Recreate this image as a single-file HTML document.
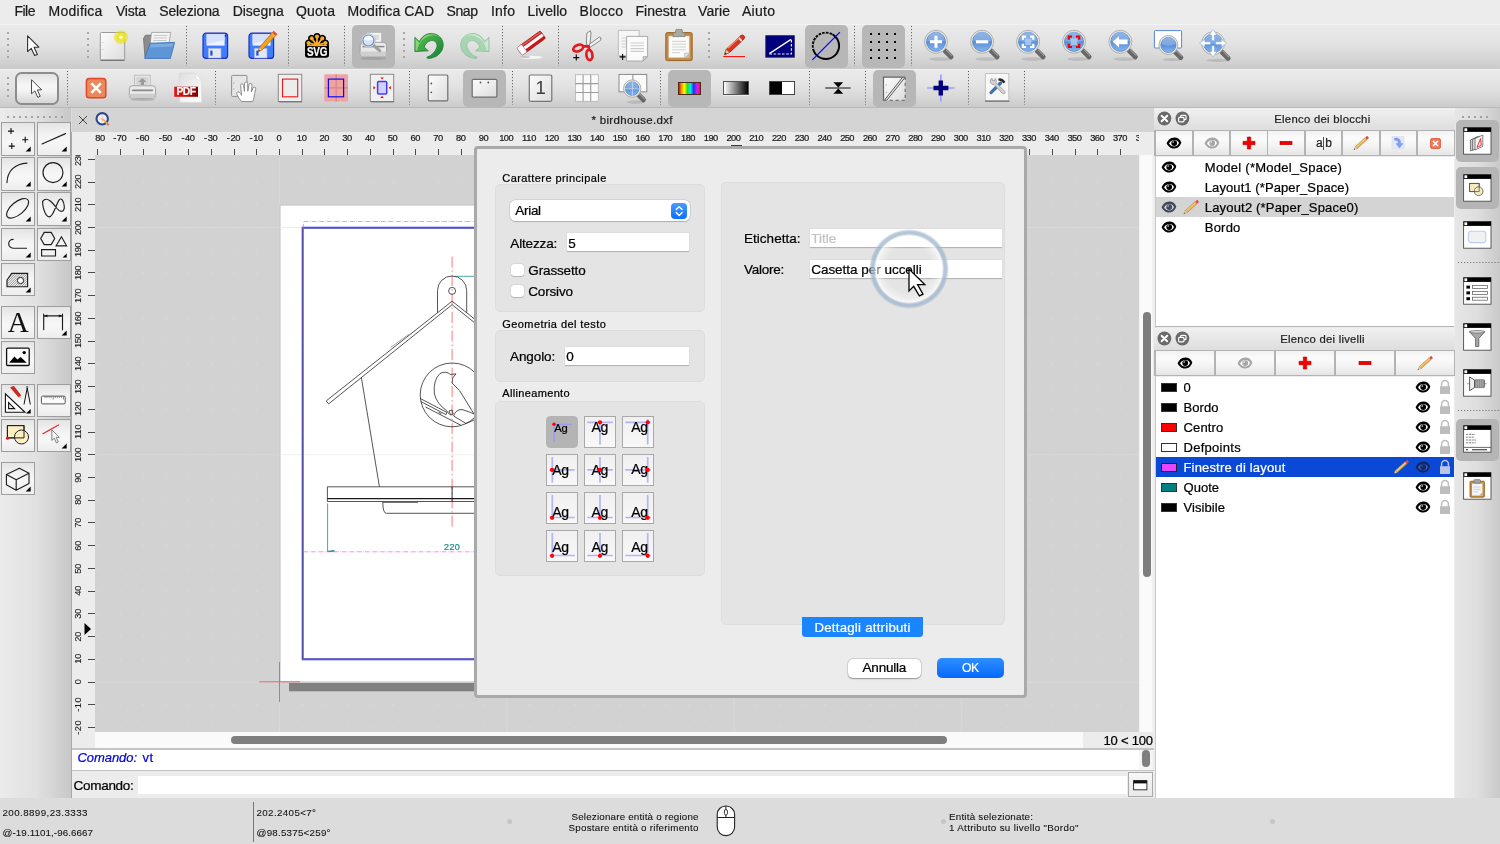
<!DOCTYPE html><html><head><meta charset="utf-8"><title>birdhouse.dxf</title><style>
html,body{margin:0;padding:0;}
#root{position:absolute;left:0;top:0;width:1500px;height:844px;will-change:transform;}
body{width:1500px;height:844px;overflow:hidden;position:relative;background:#ececec;font-family:"Liberation Sans",sans-serif;}
.t{position:absolute;white-space:pre;line-height:1;-webkit-text-stroke:0.22px currentColor;}
div{box-sizing:border-box;}
svg{position:absolute;overflow:visible;}
</style></head><body><div id="root"><div style="position:absolute;left:0px;top:0px;width:1500px;height:24px;background:#ececec;"></div><span class="t" style="left:14.50px;top:4px;font-size:14px;color:#1c1c1c;font-family:'Liberation Sans',sans-serif;letter-spacing:-0.520px;">File</span><span class="t" style="left:48.60px;top:4px;font-size:14px;color:#1c1c1c;font-family:'Liberation Sans',sans-serif;letter-spacing:0.238px;">Modifica</span><span class="t" style="left:115.90px;top:4px;font-size:14px;color:#1c1c1c;font-family:'Liberation Sans',sans-serif;letter-spacing:-0.168px;">Vista</span><span class="t" style="left:159.20px;top:4px;font-size:14px;color:#1c1c1c;font-family:'Liberation Sans',sans-serif;letter-spacing:-0.136px;">Seleziona</span><span class="t" style="left:232.70px;top:4px;font-size:14px;color:#1c1c1c;font-family:'Liberation Sans',sans-serif;letter-spacing:-0.061px;">Disegna</span><span class="t" style="left:296.00px;top:4px;font-size:14px;color:#1c1c1c;font-family:'Liberation Sans',sans-serif;letter-spacing:0.216px;">Quota</span><span class="t" style="left:347.50px;top:4px;font-size:14px;color:#1c1c1c;font-family:'Liberation Sans',sans-serif;letter-spacing:0.083px;">Modifica CAD</span><span class="t" style="left:446.50px;top:4px;font-size:14px;color:#1c1c1c;font-family:'Liberation Sans',sans-serif;letter-spacing:-0.399px;">Snap</span><span class="t" style="left:491.00px;top:4px;font-size:14px;color:#1c1c1c;font-family:'Liberation Sans',sans-serif;letter-spacing:0.216px;">Info</span><span class="t" style="left:527.50px;top:4px;font-size:14px;color:#1c1c1c;font-family:'Liberation Sans',sans-serif;letter-spacing:-0.032px;">Livello</span><span class="t" style="left:579.50px;top:4px;font-size:14px;color:#1c1c1c;font-family:'Liberation Sans',sans-serif;letter-spacing:0.296px;">Blocco</span><span class="t" style="left:635.50px;top:4px;font-size:14px;color:#1c1c1c;font-family:'Liberation Sans',sans-serif;letter-spacing:-0.011px;">Finestra</span><span class="t" style="left:698.00px;top:4px;font-size:14px;color:#1c1c1c;font-family:'Liberation Sans',sans-serif;letter-spacing:0.089px;">Varie</span><span class="t" style="left:742.00px;top:4px;font-size:14px;color:#1c1c1c;font-family:'Liberation Sans',sans-serif;letter-spacing:0.272px;">Aiuto</span><div style="position:absolute;left:0px;top:24px;width:1500px;height:44.5px;background:linear-gradient(#f7f7f7 0,#eaeaea 1.5px,#e3e3e3 42%,#d6d6d6 75%,#cacaca);"></div><div style="position:absolute;left:0px;top:68.5px;width:1500px;height:39.5px;background:linear-gradient(#f4f4f4 0,#eaeaea 1.5px,#e3e3e3 42%,#d6d6d6 75%,#cacaca);"></div><div style="position:absolute;left:0px;top:107px;width:1500px;height:1px;background:#b9b9b9;"></div><div style="position:absolute;left:0px;top:108px;width:72px;height:690px;background:linear-gradient(90deg,#ebebeb,#e1e1e1 50%,#c7c7c7);"></div><div style="position:absolute;left:71px;top:132px;width:1.2px;height:666px;background:#a9a9a9;"></div><div style="position:absolute;left:70.6px;top:108px;width:1.4px;height:24px;background:#dcdcdc;"></div><div style="position:absolute;left:72px;top:108px;width:1082px;height:24px;background:#d4d4d4;"></div><span class="t" style="left:591.50px;top:115px;font-size:11.5px;color:#1c1c1c;font-family:'Liberation Sans',sans-serif;letter-spacing:0.306px;">* birdhouse.dxf</span><div style="position:absolute;left:72px;top:132px;width:1082px;height:23px;background:#ececec;"></div><div style="position:absolute;left:72px;top:132px;width:23px;height:616px;background:#ececec;"></div><div style="position:absolute;left:95px;top:155px;width:1044px;height:577px;background:#d2d2d2;"></div><div style="position:absolute;left:95px;top:732px;width:988px;height:16px;background:#fafafa;"></div><div style="position:absolute;left:231px;top:736px;width:716px;height:8px;background:#7f7f7f;border-radius:4px;"></div><div style="position:absolute;left:1139px;top:155px;width:14.3px;height:577px;background:linear-gradient(90deg,#f0f0f0,#fafafa 12%,#fafafa 88%,#f0f0f0);"></div><div style="position:absolute;left:1143.1px;top:312.4px;width:7.8px;height:264.8px;background:#7e7e7e;border-radius:4px;"></div><div style="position:absolute;left:1153.3px;top:132px;width:2.2px;height:616px;background:#eeeeee;"></div><div style="position:absolute;left:72px;top:748px;width:1082px;height:2px;background:#c4c4c4;"></div><div style="position:absolute;left:72px;top:750px;width:1066.5px;height:20.4px;background:#fff;"></div><div style="position:absolute;left:1138.5px;top:750px;width:14.8px;height:20.4px;background:#f5f5f5;"></div><div style="position:absolute;left:72px;top:770px;width:1082px;height:1px;background:#c4c4c4;"></div><div style="position:absolute;left:72px;top:771px;width:1082px;height:27px;background:#ececec;"></div><div style="position:absolute;left:138px;top:776px;width:989px;height:18.2px;background:#fff;"></div><span class="t" style="left:77.50px;top:751px;font-size:13px;color:#0000dc;font-family:'Liberation Sans',sans-serif;letter-spacing:-0.069px;font-style:italic;">Comando:</span><span class="t" style="left:142.50px;top:751px;font-size:13px;color:#0000dc;font-family:'Liberation Sans',sans-serif;letter-spacing:0.388px;">vt</span><span class="t" style="left:73.50px;top:779px;font-size:13.5px;color:#000;font-family:'Liberation Sans',sans-serif;letter-spacing:-0.284px;">Comando:</span><div style="position:absolute;left:0px;top:798px;width:1500px;height:46px;background:#dcdcdc;"></div><div style="position:absolute;left:1154px;top:108px;width:301px;height:690px;background:#ececec;"></div><div style="position:absolute;left:1155px;top:132px;width:0.8px;height:666px;background:#c9c9c9;"></div><div style="position:absolute;left:1455px;top:108px;width:45px;height:690px;background:linear-gradient(90deg,#e6e6e6,#dedede 50%,#c9c9c9);"></div><div style="position:absolute;left:95px;top:132px;width:1044px;height:23px;overflow:hidden;"><i style="position:absolute;left:2px;top:16.5px;width:1px;height:7px;background:#4a4a4a;"></i><span class="t" style="left:-3.30px;top:2px;font-size:9.3px;color:#1a1a1a;font-family:'Liberation Sans',sans-serif;">-</span><span class="t" style="left:0.30px;top:2px;font-size:9.3px;color:#1a1a1a;font-family:'Liberation Sans',sans-serif;letter-spacing:-0.345px;">80</span><i style="position:absolute;left:25px;top:16.5px;width:1px;height:7px;background:#4a4a4a;"></i><span class="t" style="left:18.19px;top:2px;font-size:9.3px;color:#1a1a1a;font-family:'Liberation Sans',sans-serif;">-</span><span class="t" style="left:21.79px;top:2px;font-size:9.3px;color:#1a1a1a;font-family:'Liberation Sans',sans-serif;letter-spacing:-0.345px;">70</span><i style="position:absolute;left:48px;top:16.5px;width:1px;height:7px;background:#4a4a4a;"></i><span class="t" style="left:40.92px;top:2px;font-size:9.3px;color:#1a1a1a;font-family:'Liberation Sans',sans-serif;">-</span><span class="t" style="left:44.52px;top:2px;font-size:9.3px;color:#1a1a1a;font-family:'Liberation Sans',sans-serif;letter-spacing:-0.345px;">60</span><i style="position:absolute;left:70px;top:16.5px;width:1px;height:7px;background:#4a4a4a;"></i><span class="t" style="left:63.65px;top:2px;font-size:9.3px;color:#1a1a1a;font-family:'Liberation Sans',sans-serif;">-</span><span class="t" style="left:67.25px;top:2px;font-size:9.3px;color:#1a1a1a;font-family:'Liberation Sans',sans-serif;letter-spacing:-0.345px;">50</span><i style="position:absolute;left:93px;top:16.5px;width:1px;height:7px;background:#4a4a4a;"></i><span class="t" style="left:86.38px;top:2px;font-size:9.3px;color:#1a1a1a;font-family:'Liberation Sans',sans-serif;">-</span><span class="t" style="left:89.98px;top:2px;font-size:9.3px;color:#1a1a1a;font-family:'Liberation Sans',sans-serif;letter-spacing:-0.345px;">40</span><i style="position:absolute;left:116px;top:16.5px;width:1px;height:7px;background:#4a4a4a;"></i><span class="t" style="left:109.11px;top:2px;font-size:9.3px;color:#1a1a1a;font-family:'Liberation Sans',sans-serif;">-</span><span class="t" style="left:112.71px;top:2px;font-size:9.3px;color:#1a1a1a;font-family:'Liberation Sans',sans-serif;letter-spacing:-0.345px;">30</span><i style="position:absolute;left:139px;top:16.5px;width:1px;height:7px;background:#4a4a4a;"></i><span class="t" style="left:131.84px;top:2px;font-size:9.3px;color:#1a1a1a;font-family:'Liberation Sans',sans-serif;">-</span><span class="t" style="left:135.44px;top:2px;font-size:9.3px;color:#1a1a1a;font-family:'Liberation Sans',sans-serif;letter-spacing:-0.345px;">20</span><i style="position:absolute;left:161px;top:16.5px;width:1px;height:7px;background:#4a4a4a;"></i><span class="t" style="left:154.57px;top:2px;font-size:9.3px;color:#1a1a1a;font-family:'Liberation Sans',sans-serif;">-</span><span class="t" style="left:158.17px;top:2px;font-size:9.3px;color:#1a1a1a;font-family:'Liberation Sans',sans-serif;letter-spacing:-0.345px;">10</span><i style="position:absolute;left:184px;top:16.5px;width:1px;height:7px;background:#4a4a4a;"></i><span class="t" style="left:181.51px;top:2px;font-size:9.3px;color:#1a1a1a;font-family:'Liberation Sans',sans-serif;">0</span><i style="position:absolute;left:207px;top:16.5px;width:1px;height:7px;background:#4a4a4a;"></i><span class="t" style="left:201.83px;top:2px;font-size:9.3px;color:#1a1a1a;font-family:'Liberation Sans',sans-serif;letter-spacing:-0.345px;">10</span><i style="position:absolute;left:229px;top:16.5px;width:1px;height:7px;background:#4a4a4a;"></i><span class="t" style="left:224.56px;top:2px;font-size:9.3px;color:#1a1a1a;font-family:'Liberation Sans',sans-serif;letter-spacing:-0.345px;">20</span><i style="position:absolute;left:252px;top:16.5px;width:1px;height:7px;background:#4a4a4a;"></i><span class="t" style="left:247.29px;top:2px;font-size:9.3px;color:#1a1a1a;font-family:'Liberation Sans',sans-serif;letter-spacing:-0.345px;">30</span><i style="position:absolute;left:275px;top:16.5px;width:1px;height:7px;background:#4a4a4a;"></i><span class="t" style="left:270.02px;top:2px;font-size:9.3px;color:#1a1a1a;font-family:'Liberation Sans',sans-serif;letter-spacing:-0.345px;">40</span><i style="position:absolute;left:298px;top:16.5px;width:1px;height:7px;background:#4a4a4a;"></i><span class="t" style="left:292.75px;top:2px;font-size:9.3px;color:#1a1a1a;font-family:'Liberation Sans',sans-serif;letter-spacing:-0.345px;">50</span><i style="position:absolute;left:320px;top:16.5px;width:1px;height:7px;background:#4a4a4a;"></i><span class="t" style="left:315.48px;top:2px;font-size:9.3px;color:#1a1a1a;font-family:'Liberation Sans',sans-serif;letter-spacing:-0.345px;">60</span><i style="position:absolute;left:343px;top:16.5px;width:1px;height:7px;background:#4a4a4a;"></i><span class="t" style="left:338.21px;top:2px;font-size:9.3px;color:#1a1a1a;font-family:'Liberation Sans',sans-serif;letter-spacing:-0.345px;">70</span><i style="position:absolute;left:366px;top:16.5px;width:1px;height:7px;background:#4a4a4a;"></i><span class="t" style="left:360.94px;top:2px;font-size:9.3px;color:#1a1a1a;font-family:'Liberation Sans',sans-serif;letter-spacing:-0.345px;">80</span><i style="position:absolute;left:389px;top:16.5px;width:1px;height:7px;background:#4a4a4a;"></i><span class="t" style="left:383.67px;top:2px;font-size:9.3px;color:#1a1a1a;font-family:'Liberation Sans',sans-serif;letter-spacing:-0.345px;">90</span><i style="position:absolute;left:411px;top:16.5px;width:1px;height:7px;background:#4a4a4a;"></i><span class="t" style="left:404.20px;top:2px;font-size:9.3px;color:#1a1a1a;font-family:'Liberation Sans',sans-serif;letter-spacing:-0.559px;">100</span><i style="position:absolute;left:434px;top:16.5px;width:1px;height:7px;background:#4a4a4a;"></i><span class="t" style="left:426.93px;top:2px;font-size:9.3px;color:#1a1a1a;font-family:'Liberation Sans',sans-serif;letter-spacing:-0.213px;">110</span><i style="position:absolute;left:457px;top:16.5px;width:1px;height:7px;background:#4a4a4a;"></i><span class="t" style="left:449.66px;top:2px;font-size:9.3px;color:#1a1a1a;font-family:'Liberation Sans',sans-serif;letter-spacing:-0.559px;">120</span><i style="position:absolute;left:479px;top:16.5px;width:1px;height:7px;background:#4a4a4a;"></i><span class="t" style="left:472.39px;top:2px;font-size:9.3px;color:#1a1a1a;font-family:'Liberation Sans',sans-serif;letter-spacing:-0.559px;">130</span><i style="position:absolute;left:502px;top:16.5px;width:1px;height:7px;background:#4a4a4a;"></i><span class="t" style="left:495.12px;top:2px;font-size:9.3px;color:#1a1a1a;font-family:'Liberation Sans',sans-serif;letter-spacing:-0.559px;">140</span><i style="position:absolute;left:525px;top:16.5px;width:1px;height:7px;background:#4a4a4a;"></i><span class="t" style="left:517.85px;top:2px;font-size:9.3px;color:#1a1a1a;font-family:'Liberation Sans',sans-serif;letter-spacing:-0.559px;">150</span><i style="position:absolute;left:548px;top:16.5px;width:1px;height:7px;background:#4a4a4a;"></i><span class="t" style="left:540.58px;top:2px;font-size:9.3px;color:#1a1a1a;font-family:'Liberation Sans',sans-serif;letter-spacing:-0.559px;">160</span><i style="position:absolute;left:570px;top:16.5px;width:1px;height:7px;background:#4a4a4a;"></i><span class="t" style="left:563.31px;top:2px;font-size:9.3px;color:#1a1a1a;font-family:'Liberation Sans',sans-serif;letter-spacing:-0.559px;">170</span><i style="position:absolute;left:593px;top:16.5px;width:1px;height:7px;background:#4a4a4a;"></i><span class="t" style="left:586.04px;top:2px;font-size:9.3px;color:#1a1a1a;font-family:'Liberation Sans',sans-serif;letter-spacing:-0.559px;">180</span><i style="position:absolute;left:616px;top:16.5px;width:1px;height:7px;background:#4a4a4a;"></i><span class="t" style="left:608.77px;top:2px;font-size:9.3px;color:#1a1a1a;font-family:'Liberation Sans',sans-serif;letter-spacing:-0.559px;">190</span><i style="position:absolute;left:639px;top:16.5px;width:1px;height:7px;background:#4a4a4a;"></i><span class="t" style="left:631.50px;top:2px;font-size:9.3px;color:#1a1a1a;font-family:'Liberation Sans',sans-serif;letter-spacing:-0.559px;">200</span><i style="position:absolute;left:661px;top:16.5px;width:1px;height:7px;background:#4a4a4a;"></i><span class="t" style="left:654.23px;top:2px;font-size:9.3px;color:#1a1a1a;font-family:'Liberation Sans',sans-serif;letter-spacing:-0.559px;">210</span><i style="position:absolute;left:684px;top:16.5px;width:1px;height:7px;background:#4a4a4a;"></i><span class="t" style="left:676.96px;top:2px;font-size:9.3px;color:#1a1a1a;font-family:'Liberation Sans',sans-serif;letter-spacing:-0.559px;">220</span><i style="position:absolute;left:707px;top:16.5px;width:1px;height:7px;background:#4a4a4a;"></i><span class="t" style="left:699.69px;top:2px;font-size:9.3px;color:#1a1a1a;font-family:'Liberation Sans',sans-serif;letter-spacing:-0.559px;">230</span><i style="position:absolute;left:730px;top:16.5px;width:1px;height:7px;background:#4a4a4a;"></i><span class="t" style="left:722.42px;top:2px;font-size:9.3px;color:#1a1a1a;font-family:'Liberation Sans',sans-serif;letter-spacing:-0.559px;">240</span><i style="position:absolute;left:752px;top:16.5px;width:1px;height:7px;background:#4a4a4a;"></i><span class="t" style="left:745.15px;top:2px;font-size:9.3px;color:#1a1a1a;font-family:'Liberation Sans',sans-serif;letter-spacing:-0.559px;">250</span><i style="position:absolute;left:775px;top:16.5px;width:1px;height:7px;background:#4a4a4a;"></i><span class="t" style="left:767.88px;top:2px;font-size:9.3px;color:#1a1a1a;font-family:'Liberation Sans',sans-serif;letter-spacing:-0.559px;">260</span><i style="position:absolute;left:798px;top:16.5px;width:1px;height:7px;background:#4a4a4a;"></i><span class="t" style="left:790.61px;top:2px;font-size:9.3px;color:#1a1a1a;font-family:'Liberation Sans',sans-serif;letter-spacing:-0.559px;">270</span><i style="position:absolute;left:820px;top:16.5px;width:1px;height:7px;background:#4a4a4a;"></i><span class="t" style="left:813.34px;top:2px;font-size:9.3px;color:#1a1a1a;font-family:'Liberation Sans',sans-serif;letter-spacing:-0.559px;">280</span><i style="position:absolute;left:843px;top:16.5px;width:1px;height:7px;background:#4a4a4a;"></i><span class="t" style="left:836.07px;top:2px;font-size:9.3px;color:#1a1a1a;font-family:'Liberation Sans',sans-serif;letter-spacing:-0.559px;">290</span><i style="position:absolute;left:866px;top:16.5px;width:1px;height:7px;background:#4a4a4a;"></i><span class="t" style="left:858.80px;top:2px;font-size:9.3px;color:#1a1a1a;font-family:'Liberation Sans',sans-serif;letter-spacing:-0.559px;">300</span><i style="position:absolute;left:889px;top:16.5px;width:1px;height:7px;background:#4a4a4a;"></i><span class="t" style="left:881.53px;top:2px;font-size:9.3px;color:#1a1a1a;font-family:'Liberation Sans',sans-serif;letter-spacing:-0.559px;">310</span><i style="position:absolute;left:911px;top:16.5px;width:1px;height:7px;background:#4a4a4a;"></i><span class="t" style="left:904.26px;top:2px;font-size:9.3px;color:#1a1a1a;font-family:'Liberation Sans',sans-serif;letter-spacing:-0.559px;">320</span><i style="position:absolute;left:934px;top:16.5px;width:1px;height:7px;background:#4a4a4a;"></i><span class="t" style="left:926.99px;top:2px;font-size:9.3px;color:#1a1a1a;font-family:'Liberation Sans',sans-serif;letter-spacing:-0.559px;">330</span><i style="position:absolute;left:957px;top:16.5px;width:1px;height:7px;background:#4a4a4a;"></i><span class="t" style="left:949.72px;top:2px;font-size:9.3px;color:#1a1a1a;font-family:'Liberation Sans',sans-serif;letter-spacing:-0.559px;">340</span><i style="position:absolute;left:980px;top:16.5px;width:1px;height:7px;background:#4a4a4a;"></i><span class="t" style="left:972.45px;top:2px;font-size:9.3px;color:#1a1a1a;font-family:'Liberation Sans',sans-serif;letter-spacing:-0.559px;">350</span><i style="position:absolute;left:1002px;top:16.5px;width:1px;height:7px;background:#4a4a4a;"></i><span class="t" style="left:995.18px;top:2px;font-size:9.3px;color:#1a1a1a;font-family:'Liberation Sans',sans-serif;letter-spacing:-0.559px;">360</span><i style="position:absolute;left:1025px;top:16.5px;width:1px;height:7px;background:#4a4a4a;"></i><span class="t" style="left:1017.91px;top:2px;font-size:9.3px;color:#1a1a1a;font-family:'Liberation Sans',sans-serif;letter-spacing:-0.559px;">370</span><i style="position:absolute;left:1048px;top:16.5px;width:1px;height:7px;background:#4a4a4a;"></i><span class="t" style="left:1040.64px;top:2px;font-size:9.3px;color:#1a1a1a;font-family:'Liberation Sans',sans-serif;letter-spacing:-0.559px;">380</span></div><div style="position:absolute;left:72px;top:155px;width:23px;height:593px;overflow:hidden;"><i style="position:absolute;left:16px;top:572px;width:7px;height:1px;background:#4a4a4a;"></i><span class="t" style="left:-0.60px;top:567.66px;width:14.40px;height:9.3px;font-size:9.3px;letter-spacing:0.479px;color:#1a1a1a;-webkit-text-stroke:0.1px #1a1a1a;transform:rotate(-90deg);transform-origin:50% 50%;">-20</span><i style="position:absolute;left:16px;top:549px;width:7px;height:1px;background:#4a4a4a;"></i><span class="t" style="left:-0.60px;top:544.93px;width:14.40px;height:9.3px;font-size:9.3px;letter-spacing:0.479px;color:#1a1a1a;-webkit-text-stroke:0.1px #1a1a1a;transform:rotate(-90deg);transform-origin:50% 50%;">-10</span><i style="position:absolute;left:16px;top:527px;width:7px;height:1px;background:#4a4a4a;"></i><span class="t" style="left:4.05px;top:522.20px;width:5.10px;height:9.3px;font-size:9.3px;letter-spacing:0.000px;color:#1a1a1a;-webkit-text-stroke:0.1px #1a1a1a;transform:rotate(-90deg);transform-origin:50% 50%;">0</span><i style="position:absolute;left:16px;top:504px;width:7px;height:1px;background:#4a4a4a;"></i><span class="t" style="left:1.60px;top:499.47px;width:10.00px;height:9.3px;font-size:9.3px;letter-spacing:-0.345px;color:#1a1a1a;-webkit-text-stroke:0.1px #1a1a1a;transform:rotate(-90deg);transform-origin:50% 50%;">10</span><i style="position:absolute;left:16px;top:481px;width:7px;height:1px;background:#4a4a4a;"></i><span class="t" style="left:1.60px;top:476.74px;width:10.00px;height:9.3px;font-size:9.3px;letter-spacing:-0.345px;color:#1a1a1a;-webkit-text-stroke:0.1px #1a1a1a;transform:rotate(-90deg);transform-origin:50% 50%;">20</span><i style="position:absolute;left:16px;top:458px;width:7px;height:1px;background:#4a4a4a;"></i><span class="t" style="left:1.60px;top:454.01px;width:10.00px;height:9.3px;font-size:9.3px;letter-spacing:-0.345px;color:#1a1a1a;-webkit-text-stroke:0.1px #1a1a1a;transform:rotate(-90deg);transform-origin:50% 50%;">30</span><i style="position:absolute;left:16px;top:436px;width:7px;height:1px;background:#4a4a4a;"></i><span class="t" style="left:1.60px;top:431.28px;width:10.00px;height:9.3px;font-size:9.3px;letter-spacing:-0.345px;color:#1a1a1a;-webkit-text-stroke:0.1px #1a1a1a;transform:rotate(-90deg);transform-origin:50% 50%;">40</span><i style="position:absolute;left:16px;top:413px;width:7px;height:1px;background:#4a4a4a;"></i><span class="t" style="left:1.60px;top:408.55px;width:10.00px;height:9.3px;font-size:9.3px;letter-spacing:-0.345px;color:#1a1a1a;-webkit-text-stroke:0.1px #1a1a1a;transform:rotate(-90deg);transform-origin:50% 50%;">50</span><i style="position:absolute;left:16px;top:390px;width:7px;height:1px;background:#4a4a4a;"></i><span class="t" style="left:1.60px;top:385.82px;width:10.00px;height:9.3px;font-size:9.3px;letter-spacing:-0.345px;color:#1a1a1a;-webkit-text-stroke:0.1px #1a1a1a;transform:rotate(-90deg);transform-origin:50% 50%;">60</span><i style="position:absolute;left:16px;top:367px;width:7px;height:1px;background:#4a4a4a;"></i><span class="t" style="left:1.60px;top:363.09px;width:10.00px;height:9.3px;font-size:9.3px;letter-spacing:-0.345px;color:#1a1a1a;-webkit-text-stroke:0.1px #1a1a1a;transform:rotate(-90deg);transform-origin:50% 50%;">70</span><i style="position:absolute;left:16px;top:345px;width:7px;height:1px;background:#4a4a4a;"></i><span class="t" style="left:1.60px;top:340.36px;width:10.00px;height:9.3px;font-size:9.3px;letter-spacing:-0.345px;color:#1a1a1a;-webkit-text-stroke:0.1px #1a1a1a;transform:rotate(-90deg);transform-origin:50% 50%;">80</span><i style="position:absolute;left:16px;top:322px;width:7px;height:1px;background:#4a4a4a;"></i><span class="t" style="left:1.60px;top:317.63px;width:10.00px;height:9.3px;font-size:9.3px;letter-spacing:-0.345px;color:#1a1a1a;-webkit-text-stroke:0.1px #1a1a1a;transform:rotate(-90deg);transform-origin:50% 50%;">90</span><i style="position:absolute;left:16px;top:299px;width:7px;height:1px;background:#4a4a4a;"></i><span class="t" style="left:-0.80px;top:294.90px;width:14.80px;height:9.3px;font-size:9.3px;letter-spacing:-0.359px;color:#1a1a1a;-webkit-text-stroke:0.1px #1a1a1a;transform:rotate(-90deg);transform-origin:50% 50%;">100</span><i style="position:absolute;left:16px;top:277px;width:7px;height:1px;background:#4a4a4a;"></i><span class="t" style="left:-0.80px;top:272.17px;width:14.80px;height:9.3px;font-size:9.3px;letter-spacing:-0.013px;color:#1a1a1a;-webkit-text-stroke:0.1px #1a1a1a;transform:rotate(-90deg);transform-origin:50% 50%;">110</span><i style="position:absolute;left:16px;top:254px;width:7px;height:1px;background:#4a4a4a;"></i><span class="t" style="left:-0.80px;top:249.44px;width:14.80px;height:9.3px;font-size:9.3px;letter-spacing:-0.359px;color:#1a1a1a;-webkit-text-stroke:0.1px #1a1a1a;transform:rotate(-90deg);transform-origin:50% 50%;">120</span><i style="position:absolute;left:16px;top:231px;width:7px;height:1px;background:#4a4a4a;"></i><span class="t" style="left:-0.80px;top:226.71px;width:14.80px;height:9.3px;font-size:9.3px;letter-spacing:-0.359px;color:#1a1a1a;-webkit-text-stroke:0.1px #1a1a1a;transform:rotate(-90deg);transform-origin:50% 50%;">130</span><i style="position:absolute;left:16px;top:208px;width:7px;height:1px;background:#4a4a4a;"></i><span class="t" style="left:-0.80px;top:203.98px;width:14.80px;height:9.3px;font-size:9.3px;letter-spacing:-0.359px;color:#1a1a1a;-webkit-text-stroke:0.1px #1a1a1a;transform:rotate(-90deg);transform-origin:50% 50%;">140</span><i style="position:absolute;left:16px;top:186px;width:7px;height:1px;background:#4a4a4a;"></i><span class="t" style="left:-0.80px;top:181.25px;width:14.80px;height:9.3px;font-size:9.3px;letter-spacing:-0.359px;color:#1a1a1a;-webkit-text-stroke:0.1px #1a1a1a;transform:rotate(-90deg);transform-origin:50% 50%;">150</span><i style="position:absolute;left:16px;top:163px;width:7px;height:1px;background:#4a4a4a;"></i><span class="t" style="left:-0.80px;top:158.52px;width:14.80px;height:9.3px;font-size:9.3px;letter-spacing:-0.359px;color:#1a1a1a;-webkit-text-stroke:0.1px #1a1a1a;transform:rotate(-90deg);transform-origin:50% 50%;">160</span><i style="position:absolute;left:16px;top:140px;width:7px;height:1px;background:#4a4a4a;"></i><span class="t" style="left:-0.80px;top:135.79px;width:14.80px;height:9.3px;font-size:9.3px;letter-spacing:-0.359px;color:#1a1a1a;-webkit-text-stroke:0.1px #1a1a1a;transform:rotate(-90deg);transform-origin:50% 50%;">170</span><i style="position:absolute;left:16px;top:117px;width:7px;height:1px;background:#4a4a4a;"></i><span class="t" style="left:-0.80px;top:113.06px;width:14.80px;height:9.3px;font-size:9.3px;letter-spacing:-0.359px;color:#1a1a1a;-webkit-text-stroke:0.1px #1a1a1a;transform:rotate(-90deg);transform-origin:50% 50%;">180</span><i style="position:absolute;left:16px;top:95px;width:7px;height:1px;background:#4a4a4a;"></i><span class="t" style="left:-0.80px;top:90.33px;width:14.80px;height:9.3px;font-size:9.3px;letter-spacing:-0.359px;color:#1a1a1a;-webkit-text-stroke:0.1px #1a1a1a;transform:rotate(-90deg);transform-origin:50% 50%;">190</span><i style="position:absolute;left:16px;top:72px;width:7px;height:1px;background:#4a4a4a;"></i><span class="t" style="left:-0.80px;top:67.60px;width:14.80px;height:9.3px;font-size:9.3px;letter-spacing:-0.359px;color:#1a1a1a;-webkit-text-stroke:0.1px #1a1a1a;transform:rotate(-90deg);transform-origin:50% 50%;">200</span><i style="position:absolute;left:16px;top:49px;width:7px;height:1px;background:#4a4a4a;"></i><span class="t" style="left:-0.80px;top:44.87px;width:14.80px;height:9.3px;font-size:9.3px;letter-spacing:-0.359px;color:#1a1a1a;-webkit-text-stroke:0.1px #1a1a1a;transform:rotate(-90deg);transform-origin:50% 50%;">210</span><i style="position:absolute;left:16px;top:27px;width:7px;height:1px;background:#4a4a4a;"></i><span class="t" style="left:-0.80px;top:22.14px;width:14.80px;height:9.3px;font-size:9.3px;letter-spacing:-0.359px;color:#1a1a1a;-webkit-text-stroke:0.1px #1a1a1a;transform:rotate(-90deg);transform-origin:50% 50%;">220</span><i style="position:absolute;left:16px;top:4px;width:7px;height:1px;background:#4a4a4a;"></i><span class="t" style="left:-0.80px;top:-0.59px;width:14.80px;height:9.3px;font-size:9.3px;letter-spacing:-0.359px;color:#1a1a1a;-webkit-text-stroke:0.1px #1a1a1a;transform:rotate(-90deg);transform-origin:50% 50%;">230</span></div><div style="position:absolute;left:730.7px;top:144.9px;width:11.3px;height:1.2px;background:#3c3c3c;"></div><svg style="left:84px;top:622px;" width="8" height="14"><path d="M0.5 1 L7 7 L0.5 13 Z" fill="#000"/></svg><svg style="left:95px;top:155px;overflow:hidden;" width="1044" height="577" viewBox="95 155 1044 577"><defs><pattern id="gd" x="279.5" y="682.1" width="22.73" height="22.73" patternUnits="userSpaceOnUse"><rect x="-0.6" y="-0.6" width="1.3" height="1.3" fill="#dadada"/><rect x="22.1" y="-0.6" width="1.3" height="1.3" fill="#dadada"/><rect x="-0.6" y="22.1" width="1.3" height="1.3" fill="#dadada"/><rect x="22.1" y="22.1" width="1.3" height="1.3" fill="#dadada"/></pattern></defs><rect x="95" y="155" width="1048" height="577" fill="url(#gd)"/><line x1="279.5" y1="155" x2="279.5" y2="732" stroke="#d8d8d8" stroke-width="1"/><line x1="506.8" y1="155" x2="506.8" y2="732" stroke="#d8d8d8" stroke-width="1"/><line x1="734.1" y1="155" x2="734.1" y2="732" stroke="#d8d8d8" stroke-width="1"/><line x1="961.4" y1="155" x2="961.4" y2="732" stroke="#d8d8d8" stroke-width="1"/><line x1="95" y1="682.1" x2="1143" y2="682.1" stroke="#d8d8d8" stroke-width="1"/><line x1="95" y1="454.8" x2="1143" y2="454.8" stroke="#d8d8d8" stroke-width="1"/><line x1="95" y1="227.5" x2="1143" y2="227.5" stroke="#d8d8d8" stroke-width="1"/><rect x="289" y="683" width="700" height="8.3" fill="#808080"/><rect x="280" y="205" width="700" height="477" fill="#fff" stroke="#c9c9c9" stroke-width="1.3"/><line x1="280" y1="227.5" x2="303" y2="227.5" stroke="#ececec" stroke-width="1"/><line x1="280.6" y1="454.8" x2="700" y2="454.8" stroke="#f0f0f0" stroke-width="1"/><path d="M700 227.8 H302.7 V659.2 H700" fill="none" stroke="#9494f4" stroke-width="2.5"/><path d="M700 227.8 H302.7 V659.2 H700" fill="none" stroke="#46469e" stroke-width="1.2"/><path d="M303.4 552 V221.5 H700 M303.4 551.8 H700" fill="none" stroke="#ff40ff" stroke-opacity=".62" stroke-width="1" stroke-dasharray="4.5 1.5 0.7 1"/><path d="M452.1 256.6 V529.4" stroke="#ff7a7a" stroke-width="1" stroke-dasharray="11 3 1.5 3" fill="none"/><path d="M455 276.3 H700" stroke="#3aa0a0" stroke-width="0.9" fill="none"/><path d="M327.6 503.4 V551.4 M327.6 551.4 l6.5 -1 v1.2 z" stroke="#2f9a9a" stroke-width="0.9" fill="#1a8080"/><path d="M437.5 312.8 V290.6 A14.6 14.6 0 0 1 466.7 290.6 V312.8" stroke="#2a2a2a" stroke-width="0.8" fill="none"/><circle cx="452.1" cy="290.9" r="3.5" stroke="#2a2a2a" stroke-width="0.8" fill="none"/><path d="M577.9 400.9 L452.1 301.2 L326.2 400.9 L328.6 403.9 L452.1 304.7 L575.5 403.9 Z" stroke="#2a2a2a" stroke-width="0.8" fill="none"/><path d="M390.6 347.5 L408.7 334.4" stroke="#9a9a9a" stroke-width="0.9"/><path d="M361.4 377.7 L379.4 486.6" stroke="#2a2a2a" stroke-width="0.8" fill="none"/><circle cx="452.1" cy="394.9" r="31.9" stroke="#2a2a2a" stroke-width="0.8" fill="none"/><path d="M420.4 398.6 L447 412.4 L446 414.6 L420.9 401.6 M425.5 407 L461 425.3 M438.5 412.2 l3 1.6" stroke="#2a2a2a" stroke-width="0.8" fill="none"/><path d="M449.5 414.5 L446.5 410.5 Q437 404 434.4 394 Q433 380 440 373.5 Q446 370.5 450.5 374.5 L456 373.8 Q451.5 377.5 452 383 Q460 389 466 401 L474 414" stroke="#2a2a2a" stroke-width="0.8" fill="none"/><path d="M449 411 l3 -1 l1.2 4 l-2.5 1 z M453.6 416 Q455.5 409.5 462 409.5 L470 412.2 L474 414 M453.6 416 L466 423.5 L474 420" stroke="#2a2a2a" stroke-width="0.8" fill="none"/><path d="M700 486.8 H327.4 V501.5 H700" stroke="#2a2a2a" stroke-width="0.8" fill="none"/><path d="M327.4 498.6 H700" stroke="#1a1a1a" stroke-width="1.4"/><path d="M452.1 486.8 V501.5" stroke="#333" stroke-width="1"/><path d="M383 502.5 H418" stroke="#777" stroke-width="1"/><path d="M382.8 502 Q382.8 513.3 386.5 513.3 H700" stroke="#2a2a2a" stroke-width="0.8" fill="none"/><path d="M259.2 681.8 H300 M279.5 662 V702" stroke="#e26a6a" stroke-width="1"/></svg><span class="t" style="left:444.00px;top:543px;font-size:9px;color:#1a8a8a;font-family:'Liberation Sans',sans-serif;letter-spacing:0.392px;">220</span><div style="position:absolute;left:1083px;top:732px;width:70.3px;height:16.3px;background:#ececec;"></div><span class="t" style="left:1103.40px;top:734px;font-size:13px;color:#000;font-family:'Liberation Sans',sans-serif;letter-spacing:-0.195px;">10 &lt; 100</span><svg width="0" height="0" style="left:0;top:0"><defs><linearGradient id="lg" x1="0" y1="0" x2="0" y2="1"><stop offset="0" stop-color="#6f9fe0"/><stop offset=".5" stop-color="#5a8fd8"/><stop offset="1" stop-color="#86b4ec"/></linearGradient><linearGradient id="pg" x1="0" y1="0" x2="1" y2="1"><stop offset="0" stop-color="#fdfdfd"/><stop offset="1" stop-color="#dcdcdc"/></linearGradient><linearGradient id="gr" x1="0" y1="0" x2="1" y2="1"><stop offset="0" stop-color="#5cc24c"/><stop offset="1" stop-color="#15803a"/></linearGradient></defs></svg><div style="position:absolute;left:7px;top:32px;width:2px;height:2px;background:#a6a6a6;"></div><div style="position:absolute;left:7px;top:38px;width:2px;height:2px;background:#a6a6a6;"></div><div style="position:absolute;left:7px;top:44px;width:2px;height:2px;background:#a6a6a6;"></div><div style="position:absolute;left:7px;top:50px;width:2px;height:2px;background:#a6a6a6;"></div><div style="position:absolute;left:7px;top:56px;width:2px;height:2px;background:#a6a6a6;"></div><svg style="left:26.6px;top:34.9px" width="20" height="26" viewBox="0 0 20 26"><path transform="scale(1.0)" d="M0.6 0.8 L0.6 16.6 L4.3 13.4 L7.6 20.6 L10.4 19.4 L7.1 12.3 L11.9 12.1 Z" fill="#fff" stroke="#333" stroke-width="1.1" stroke-linejoin="round"/></svg><div style="position:absolute;left:87px;top:32px;width:2px;height:2px;background:#a6a6a6;"></div><div style="position:absolute;left:87px;top:38px;width:2px;height:2px;background:#a6a6a6;"></div><div style="position:absolute;left:87px;top:44px;width:2px;height:2px;background:#a6a6a6;"></div><div style="position:absolute;left:87px;top:50px;width:2px;height:2px;background:#a6a6a6;"></div><div style="position:absolute;left:87px;top:56px;width:2px;height:2px;background:#a6a6a6;"></div><svg style="left:98px;top:30px" width="30" height="33" viewBox="0 0 30 33" ><rect x="2.3" y="2.5" width="24.4" height="27.5" rx="1.2" fill="url(#pg)" stroke="#9a9a9a" stroke-width="1"/><path d="M2.5 30.4 H26.5" stroke="#777" stroke-width="1.2"/><circle cx="4.8" cy="12.5" r=".5" fill="#aaa"/><circle cx="4.8" cy="19.5" r=".5" fill="#aaa"/><circle cx="23" cy="7.3" r="7" fill="#e6de18" opacity=".55"/><circle cx="23" cy="7.3" r="4.8" fill="#efe71c" opacity=".9"/><circle cx="23" cy="7.3" r="1.8" fill="#fffde0"/></svg><svg style="left:142px;top:30px" width="35" height="31" viewBox="0 0 35 31" ><path d="M1.5 8.5 L3.5 5.2 H12 L13.5 8.5 V27 H3 Z" fill="#8c8c8c" stroke="#6a6a6a" stroke-width=".8"/><path d="M9.5 2.4 H28.6 L26 21 H7.5 Z" fill="#f4f4f4" stroke="#999" stroke-width=".8"/><path d="M12 5.5 H25.5 M11.6 8 H25 M11.2 10.5 H24.6" stroke="#c8c8c8" stroke-width="1"/><path d="M8 13.2 L32.6 12.4 L28.4 28.4 H2.6 Z" fill="#5e95d6" stroke="#3f74b8" stroke-width=".9"/><path d="M8.8 14.2 L31.4 13.5 L30.6 16.5 L8 17.4 Z" fill="#8ab6e8" opacity=".7"/></svg><svg style="left:185.9px;top:26px" width="1" height="40"><line x1="0.5" y1="0" x2="0.5" y2="40" stroke="#555" stroke-width="1" stroke-dasharray="1 2.05"/></svg><svg style="left:201.5px;top:31.8px" width="27" height="28" viewBox="0 0 27 28" ><rect x="1" y="1.2" width="24.6" height="25.2" rx="3" fill="#3f7dff" stroke="#2230b8" stroke-width="1.2"/><path d="M4.6 2.2 H22.6 V13.6 H4.6 Z" fill="#eef2ff"/><path d="M4.6 2.2 H22.6 V8 L4.6 12 Z" fill="#d6e0fb"/><rect x="6.4" y="16.4" width="12.6" height="9.6" fill="#e4e6f0" stroke="#9fb0e8" stroke-width=".6"/><rect x="8.3" y="18.6" width="2.2" height="5" fill="#2448d8"/><rect x="22.8" y="3" width="1.4" height="1.6" fill="#1a2a90"/></svg><svg style="left:247.6px;top:31.8px" width="27" height="28" viewBox="0 0 27 28" ><rect x="1" y="1.2" width="24.6" height="25.2" rx="3" fill="#3f7dff" stroke="#2230b8" stroke-width="1.2"/><path d="M4.6 2.2 H22.6 V13.6 H4.6 Z" fill="#eef2ff"/><path d="M4.6 2.2 H22.6 V8 L4.6 12 Z" fill="#d6e0fb"/><rect x="6.4" y="16.4" width="12.6" height="9.6" fill="#e4e6f0" stroke="#9fb0e8" stroke-width=".6"/><rect x="8.3" y="18.6" width="2.2" height="5" fill="#2448d8"/><rect x="22.8" y="3" width="1.4" height="1.6" fill="#1a2a90"/></svg><svg style="left:255px;top:29px" width="24" height="24" viewBox="0 0 24 24" ><path d="M18.6 2.2 L22 5.2 L7.4 20.6 L3.4 22.6 L4.6 18.2 Z" fill="#f6a21e" stroke="#b8680c" stroke-width=".8"/><path d="M17 4 L20.4 7" stroke="#ffd27a" stroke-width="1.6"/><path d="M18.6 2.2 L22 5.2 L20.4 6.9 L17 3.9 Z" fill="#e2503a"/><path d="M3.4 22.6 L4.6 18.2 L7.4 20.6 Z" fill="#f0d6a8" stroke="#a06a2a" stroke-width=".5"/><path d="M3.4 22.6 L3.9 20.7 L5 21.8 Z" fill="#222"/></svg><svg style="left:287.9px;top:26px" width="1" height="40"><line x1="0.5" y1="0" x2="0.5" y2="40" stroke="#555" stroke-width="1" stroke-dasharray="1 2.05"/></svg><svg style="left:305px;top:33px" width="24" height="26" viewBox="0 0 24 26" ><g transform="rotate(-74 12 12.4)"><rect x="10.1" y="3.4" width="3.8" height="8" fill="#000"/><circle cx="12" cy="3.6" r="3.5" fill="#000"/></g><g transform="rotate(-37 12 12.4)"><rect x="10.1" y="3.4" width="3.8" height="8" fill="#000"/><circle cx="12" cy="3.6" r="3.5" fill="#000"/></g><g transform="rotate(0 12 12.4)"><rect x="10.1" y="3.4" width="3.8" height="8" fill="#000"/><circle cx="12" cy="3.6" r="3.5" fill="#000"/></g><g transform="rotate(37 12 12.4)"><rect x="10.1" y="3.4" width="3.8" height="8" fill="#000"/><circle cx="12" cy="3.6" r="3.5" fill="#000"/></g><g transform="rotate(74 12 12.4)"><rect x="10.1" y="3.4" width="3.8" height="8" fill="#000"/><circle cx="12" cy="3.6" r="3.5" fill="#000"/></g><path d="M2.8 10.6 H21.2 Q24 10.6 24 13.4 V22 Q24 24.7 21.2 24.7 H2.8 Q0 24.7 0 22 V13.4 Q0 10.6 2.8 10.6 Z" fill="#000"/><g transform="rotate(-74 12 12.4)"><rect x="11.1" y="3.4" width="1.8" height="8" fill="#f9a928"/><circle cx="12" cy="3.6" r="2.05" fill="#f9a928"/></g><g transform="rotate(-37 12 12.4)"><rect x="11.1" y="3.4" width="1.8" height="8" fill="#f9a928"/><circle cx="12" cy="3.6" r="2.05" fill="#f9a928"/></g><g transform="rotate(0 12 12.4)"><rect x="11.1" y="3.4" width="1.8" height="8" fill="#f9a928"/><circle cx="12" cy="3.6" r="2.05" fill="#f9a928"/></g><g transform="rotate(37 12 12.4)"><rect x="11.1" y="3.4" width="1.8" height="8" fill="#f9a928"/><circle cx="12" cy="3.6" r="2.05" fill="#f9a928"/></g><g transform="rotate(74 12 12.4)"><rect x="11.1" y="3.4" width="1.8" height="8" fill="#f9a928"/><circle cx="12" cy="3.6" r="2.05" fill="#f9a928"/></g><circle cx="12" cy="12.2" r="3.2" fill="#f9a928"/><rect x="2" y="12" width="20" height="1.3" fill="#f9a928"/><rect x="0" y="13.3" width="24" height="3" fill="#000"/></svg><span class="t" style="left:306.90px;top:46px;font-size:12.4px;color:#fff;font-family:'Liberation Sans',sans-serif;letter-spacing:-0.344px;font-weight:bold;transform:scaleX(0.8);transform-origin:0 0;">SVG</span><svg style="left:344.0px;top:26px" width="1" height="40"><line x1="0.5" y1="0" x2="0.5" y2="40" stroke="#555" stroke-width="1" stroke-dasharray="1 2.05"/></svg><div style="position:absolute;left:352.3px;top:25px;width:42.4px;height:42.8px;background:#b7b7b7;border-radius:5px;"></div><svg style="left:357px;top:29px" width="33" height="32" viewBox="0 0 33 32" ><rect x="9.5" y="3.4" width="15" height="12" fill="#f2f2f2" stroke="#b8b8b8" stroke-width=".8"/><rect x="17" y="6" width="5" height="5" fill="#dcdcdc"/><path d="M3.2 16.5 Q3.2 13.4 6.4 13.4 H26.4 Q29.6 13.4 29.6 16.5 V25 Q29.6 27.6 27 27.6 H5.8 Q3.2 27.6 3.2 25 Z" fill="#e9e9e9" stroke="#9c9c9c" stroke-width=".9"/><path d="M5.5 17.6 H27.4" stroke="#8a8a8a" stroke-width="1.5"/><path d="M3.4 22.4 H29.4 V25 Q29.4 27.4 27 27.4 H5.8 Q3.4 27.4 3.4 25 Z" fill="#cfcfcf"/><ellipse cx="16.4" cy="29.4" rx="13" ry="1.4" fill="#000" opacity=".12"/><path d="M15.4 15.4 L22.6 21.6" stroke="#a0a09a" stroke-width="3.2" stroke-linecap="round"/><circle cx="11.4" cy="11.5" r="6.9" fill="#e4e4de" stroke="#b4b4ae" stroke-width=".6"/><circle cx="11.4" cy="11.5" r="5.5" fill="#d6e3f4" stroke="#5a8ed6" stroke-width="1.1"/><path d="M6.6 10.6 A4.9 4.9 0 0 1 16.2 10.6 Q11.4 12.6 6.6 10.6 Z" fill="#fff" opacity=".8"/></svg><div style="position:absolute;left:403px;top:32px;width:2px;height:2px;background:#a6a6a6;"></div><div style="position:absolute;left:403px;top:38px;width:2px;height:2px;background:#a6a6a6;"></div><div style="position:absolute;left:403px;top:44px;width:2px;height:2px;background:#a6a6a6;"></div><div style="position:absolute;left:403px;top:50px;width:2px;height:2px;background:#a6a6a6;"></div><div style="position:absolute;left:403px;top:56px;width:2px;height:2px;background:#a6a6a6;"></div><svg style="left:0;top:24px;" width="1500" height="44" viewBox="0 24 1500 44"><path d="M414.85 37.3 L414.85 51.6 L428.3 50.85 L424.2 47.2 C425.6 42.6 429.6 40.2 432.6 40.6 C436.2 41 437.8 44.2 436.7 47.6 C435.4 52 431.4 55.8 426.8 57.3 L427.6 58.4 C436 58.6 443.1 52.6 443.2 45 C443.3 38 437.6 33.5 431 33.5 C426 33.5 421.8 36.6 419.3 41.6 Z" fill="url(#gr)" stroke="#1c7f34" stroke-width=".8" stroke-linejoin="round"/><path d="M415.6 39 L415.6 50.6 L417.4 50.5 C417.6 44 424 35.6 433 35.2 C437 35 440 37 441.6 39.6 C439.6 36 436 34.2 431 34.2 C426.2 34.2 422.2 37.4 419.6 43 Z" fill="#c8f4b0" opacity=".5"/><g transform="translate(903.9 0) scale(-1 1)" opacity=".6"><path d="M414.85 37.3 L414.85 51.6 L428.3 50.85 L424.2 47.2 C425.6 42.6 429.6 40.2 432.6 40.6 C436.2 41 437.8 44.2 436.7 47.6 C435.4 52 431.4 55.8 426.8 57.3 L427.6 58.4 C436 58.6 443.1 52.6 443.2 45 C443.3 38 437.6 33.5 431 33.5 C426 33.5 421.8 36.6 419.3 41.6 Z" fill="#84cc92" stroke="#58ac70" stroke-width=".8" stroke-linejoin="round"/><path d="M415.6 39 L415.6 50.6 L417.4 50.5 C417.6 44 424 35.6 433 35.2 C437 35 440 37 441.6 39.6 C439.6 36 436 34.2 431 34.2 C426.2 34.2 422.2 37.4 419.6 43 Z" fill="#e6f8e0" opacity=".7"/></g></svg><svg style="left:501.9px;top:26px" width="1" height="40"><line x1="0.5" y1="0" x2="0.5" y2="40" stroke="#555" stroke-width="1" stroke-dasharray="1 2.05"/></svg><svg style="left:516px;top:31px" width="31" height="30" viewBox="0 0 31 30" ><ellipse cx="15" cy="26.4" rx="11.5" ry="1.6" fill="#fff" opacity=".8"/><ellipse cx="9" cy="26" rx="5" ry="1.1" fill="#000" opacity=".2"/><g transform="rotate(-36 15 12)"><rect x="0.6" y="7.6" width="29" height="9.2" rx="1.4" fill="#cf1616" stroke="#8e0e0e" stroke-width=".7"/><rect x="6.4" y="10.6" width="23" height="3.3" fill="#fff"/><rect x="0.6" y="7.6" width="6" height="9.2" rx="1" fill="#fafafa" stroke="#b0a0a0" stroke-width=".6"/><rect x="6.6" y="8" width="22.6" height="1.5" fill="#ee6a6a" opacity=".8"/></g></svg><svg style="left:558.0px;top:26px" width="1" height="40"><line x1="0.5" y1="0" x2="0.5" y2="40" stroke="#555" stroke-width="1" stroke-dasharray="1 2.05"/></svg><svg style="left:570px;top:29px" width="34" height="34" viewBox="0 0 34 34" ><path d="M16.4 15.4 L16.8 4.2 L20.4 1.8 L21 4 L19.8 17 Z" fill="#f2f2f2" stroke="#6e6e6e" stroke-width=".8" stroke-linejoin="round"/><path d="M18.8 15.8 L29.4 8 L31 9 L30.5 11.4 L20.2 18.2 Z" fill="#f2f2f2" stroke="#6e6e6e" stroke-width=".8" stroke-linejoin="round"/><ellipse cx="8.2" cy="19.1" rx="5.2" ry="3" fill="none" stroke="#e01a20" stroke-width="2.7" transform="rotate(-22 8.2 19.1)"/><ellipse cx="19.4" cy="26" rx="3" ry="5.1" fill="none" stroke="#e01a20" stroke-width="2.7" transform="rotate(-8 19.4 26)"/><path d="M12.8 17.4 L18.6 17.2 L19.2 21" stroke="#e01a20" stroke-width="2.6" fill="none" stroke-linejoin="round"/><path d="M3.3 28.6 H9.3 M6.3 25.6 V31.6" stroke="#000" stroke-width="1.1"/></svg><svg style="left:616px;top:29px" width="34" height="34" viewBox="0 0 34 34" ><path d="M2.4 1.4 H23.2 V26.6 H2.4 Z" fill="#f6f6f6" stroke="#b4b4b4" stroke-width=".8"/><path d="M5.5 9 H14 M5.5 12 H14 M5.5 15 H12 M5.5 18 H11" stroke="#cfcfcf" stroke-width="1"/><path d="M10.6 7.4 H31.6 V27.6 L27 32 H10.6 Z" fill="#fbfbfb" stroke="#a2a2a2" stroke-width=".9"/><path d="M31.6 27.6 L27 32 V27.6 Z" fill="#c9c9c9" stroke="#9a9a9a" stroke-width=".6"/><path d="M14.5 14 H28 M14.5 16.8 H28 M14.5 19.6 H28 M14.5 22.4 H28" stroke="#cdcdcd" stroke-width="1.1"/><path d="M3.6 27.9 H9.6 M6.6 24.9 V30.9" stroke="#000" stroke-width="1.1"/></svg><svg style="left:664px;top:28px" width="30" height="34" viewBox="0 0 30 34" ><rect x="1.8" y="4.6" width="26.4" height="28" rx="1.6" fill="#c68a3c" stroke="#8e5a18" stroke-width=".9"/><path d="M4.6 8 H25.4 V29.8 H4.6 Z" fill="#fafafa" stroke="#b9b09f" stroke-width=".6"/><path d="M25.4 25 L20.6 29.8 H25.4 Z" fill="#b4b4b4"/><path d="M20.6 29.8 V25 H25.4" fill="#dedede" stroke="#aaa" stroke-width=".5"/><path d="M8 13.4 H22 M8 16.2 H22 M8 19 H22 M8 21.8 H22 M8 24.6 H16" stroke="#d2d2d2" stroke-width="1"/><path d="M9 8.6 V5.8 Q9 4.4 10.6 4.4 H11.6 V2.6 Q11.6 1.4 13 1.4 H17 Q18.4 1.4 18.4 2.6 V4.4 H19.4 Q21 4.4 21 5.8 V8.6 Z" fill="#a9a9a1" stroke="#77776f" stroke-width=".7"/></svg><div style="position:absolute;left:708px;top:32px;width:2px;height:2px;background:#a6a6a6;"></div><div style="position:absolute;left:708px;top:38px;width:2px;height:2px;background:#a6a6a6;"></div><div style="position:absolute;left:708px;top:44px;width:2px;height:2px;background:#a6a6a6;"></div><div style="position:absolute;left:708px;top:50px;width:2px;height:2px;background:#a6a6a6;"></div><div style="position:absolute;left:708px;top:56px;width:2px;height:2px;background:#a6a6a6;"></div><svg style="left:721px;top:31px" width="26" height="28" viewBox="0 0 26 28" ><path d="M2.2 25.6 H24" stroke="#f00" stroke-width="1"/><path d="M19.8 4.6 Q21.6 3.2 23.2 5 Q24.4 6.6 22.8 8.2 L8.6 21.4 L3.6 23.8 L5.2 18.4 Z" fill="#e0321c" stroke="#8a2a12" stroke-width=".8"/><path d="M17.6 6.8 L20.8 10" stroke="#e8e8e8" stroke-width="1.8"/><path d="M7 17 L19 6" stroke="#f58a6a" stroke-width="1.3"/><path d="M3.6 23.8 L5.2 18.4 L8.6 21.4 Z" fill="#eacb9c" stroke="#8a5a2a" stroke-width=".5"/><path d="M3.6 23.8 L4.2 21.6 L5.6 22.8 Z" fill="#222"/></svg><svg style="left:765px;top:35px" width="30" height="23" viewBox="0 0 30 23" ><rect x=".8" y=".7" width="28.5" height="21.5" fill="#00007e" stroke="#1c1c4a" stroke-width=".8"/><path d="M4.4 18.6 L26 4.4" stroke="#fff" stroke-width="1.3"/><path d="M4.4 19 H26.4 V4.6" stroke="#e8e8ff" stroke-width="1.2" stroke-dasharray="2.6 1.6" fill="none"/></svg><div style="position:absolute;left:805px;top:25px;width:42.5px;height:42.8px;background:#b7b7b7;border-radius:5px;"></div><svg style="left:808px;top:28px" width="36" height="36" viewBox="0 0 36 36" ><circle cx="17.9" cy="17.8" r="13.2" fill="none" stroke="#000" stroke-width="1.9"/><path d="M4.5 21 A13.6 13.6 0 0 1 24.6 6" fill="none" stroke="#b7b7b7" stroke-width="3" stroke-dasharray="1.3 2.6"/><path d="M4.4 31.8 L31.9 4.2" stroke="#0000f0" stroke-width="1.2"/></svg><svg style="left:853.8px;top:26px" width="1" height="40"><line x1="0.5" y1="0" x2="0.5" y2="40" stroke="#555" stroke-width="1" stroke-dasharray="1 2.05"/></svg><div style="position:absolute;left:862.2px;top:25px;width:42.5px;height:42.8px;background:#b7b7b7;border-radius:5px;"></div><div style="position:absolute;left:869.9px;top:32.8px;width:2.2px;height:2.2px;background:#000;"></div><div style="position:absolute;left:869.9px;top:40.8px;width:2.2px;height:2.2px;background:#000;"></div><div style="position:absolute;left:869.9px;top:48.9px;width:2.2px;height:2.2px;background:#000;"></div><div style="position:absolute;left:869.9px;top:56.8px;width:2.2px;height:2.2px;background:#000;"></div><div style="position:absolute;left:878.0px;top:32.8px;width:2.2px;height:2.2px;background:#000;"></div><div style="position:absolute;left:878.0px;top:40.8px;width:2.2px;height:2.2px;background:#000;"></div><div style="position:absolute;left:878.0px;top:48.9px;width:2.2px;height:2.2px;background:#000;"></div><div style="position:absolute;left:878.0px;top:56.8px;width:2.2px;height:2.2px;background:#000;"></div><div style="position:absolute;left:885.9px;top:32.8px;width:2.2px;height:2.2px;background:#000;"></div><div style="position:absolute;left:885.9px;top:40.8px;width:2.2px;height:2.2px;background:#000;"></div><div style="position:absolute;left:885.9px;top:48.9px;width:2.2px;height:2.2px;background:#000;"></div><div style="position:absolute;left:885.9px;top:56.8px;width:2.2px;height:2.2px;background:#000;"></div><div style="position:absolute;left:894.0px;top:32.8px;width:2.2px;height:2.2px;background:#000;"></div><div style="position:absolute;left:894.0px;top:40.8px;width:2.2px;height:2.2px;background:#000;"></div><div style="position:absolute;left:894.0px;top:48.9px;width:2.2px;height:2.2px;background:#000;"></div><div style="position:absolute;left:894.0px;top:56.8px;width:2.2px;height:2.2px;background:#000;"></div><svg style="left:910.8px;top:26px" width="1" height="40"><line x1="0.5" y1="0" x2="0.5" y2="40" stroke="#555" stroke-width="1" stroke-dasharray="1 2.05"/></svg><svg style="left:0;top:24px;" width="1500" height="44" viewBox="0 24 1500 44"><ellipse cx="940.9" cy="59.0" rx="11.7" ry="1.7" fill="#000" opacity=".11"/><path d="M943.3 49.1 L948.2 54.0" stroke="#8c8c86" stroke-width="2.4" stroke-linecap="round"/><path d="M945.0 50.8 L951.0 56.8" stroke="#676767" stroke-width="5" stroke-linecap="round"/><path d="M946.2 50.0 L951.8 55.6" stroke="#9a9a94" stroke-width="1.1" stroke-linecap="round"/><circle cx="936" cy="41.8" r="11.5" fill="#e9e9e2" stroke="#a9a9a2" stroke-width="0.9"/><circle cx="936" cy="41.8" r="9.6" fill="url(#lg)" stroke="#4d83cf" stroke-width="0.7"/><path d="M927.0 40.8 A9.0 9.0 0 0 1 945.0 40.8 Q936 44.3 927.0 40.8 Z" fill="#fff" opacity=".22"/><path d="M930 41.8 H942 M936 35.8 V47.8" stroke="#fff" stroke-linecap="butt" fill="none" stroke-width="3.1"/><ellipse cx="987.0" cy="59.0" rx="11.7" ry="1.7" fill="#000" opacity=".11"/><path d="M989.4 49.1 L994.3 54.0" stroke="#8c8c86" stroke-width="2.4" stroke-linecap="round"/><path d="M991.1 50.8 L997.1 56.8" stroke="#676767" stroke-width="5" stroke-linecap="round"/><path d="M992.3 50.0 L997.9 55.6" stroke="#9a9a94" stroke-width="1.1" stroke-linecap="round"/><circle cx="982.1" cy="41.8" r="11.5" fill="#e9e9e2" stroke="#a9a9a2" stroke-width="0.9"/><circle cx="982.1" cy="41.8" r="9.6" fill="url(#lg)" stroke="#4d83cf" stroke-width="0.7"/><path d="M973.1 40.8 A9.0 9.0 0 0 1 991.1 40.8 Q982.1 44.3 973.1 40.8 Z" fill="#fff" opacity=".22"/><path d="M976 41.8 H988.2" stroke="#fff" stroke-linecap="butt" fill="none" stroke-width="3.1"/><ellipse cx="1033.0" cy="59.0" rx="11.7" ry="1.7" fill="#000" opacity=".11"/><path d="M1035.4 49.1 L1040.3 54.0" stroke="#8c8c86" stroke-width="2.4" stroke-linecap="round"/><path d="M1037.1 50.8 L1043.1 56.8" stroke="#676767" stroke-width="5" stroke-linecap="round"/><path d="M1038.3 50.0 L1043.9 55.6" stroke="#9a9a94" stroke-width="1.1" stroke-linecap="round"/><circle cx="1028.1" cy="41.8" r="11.5" fill="#e9e9e2" stroke="#a9a9a2" stroke-width="0.9"/><circle cx="1028.1" cy="41.8" r="9.6" fill="url(#lg)" stroke="#4d83cf" stroke-width="0.7"/><path d="M1019.0999999999999 40.8 A9.0 9.0 0 0 1 1037.1 40.8 Q1028.1 44.3 1019.0999999999999 40.8 Z" fill="#fff" opacity=".22"/><rect x="1024.8999999999999" y="38.599999999999994" width="6.4" height="6.4" fill="#b4d0f4" opacity=".75"/><path d="M1022.8999999999999 39.8 V36.599999999999994 H1026.1 M1030.1 36.599999999999994 H1033.3 V39.8 M1033.3 43.8 V47.0 H1030.1 M1026.1 47.0 H1022.8999999999999 V43.8" stroke="#fff" stroke-width="2.2" fill="none"/><ellipse cx="1078.9" cy="59.0" rx="11.7" ry="1.7" fill="#000" opacity=".11"/><path d="M1081.3 49.1 L1086.2 54.0" stroke="#8c8c86" stroke-width="2.4" stroke-linecap="round"/><path d="M1083.0 50.8 L1089.0 56.8" stroke="#676767" stroke-width="5" stroke-linecap="round"/><path d="M1084.2 50.0 L1089.8 55.6" stroke="#9a9a94" stroke-width="1.1" stroke-linecap="round"/><circle cx="1074" cy="41.8" r="11.5" fill="#e9e9e2" stroke="#a9a9a2" stroke-width="0.9"/><circle cx="1074" cy="41.8" r="9.6" fill="url(#lg)" stroke="#4d83cf" stroke-width="0.7"/><path d="M1065.0 40.8 A9.0 9.0 0 0 1 1083.0 40.8 Q1074 44.3 1065.0 40.8 Z" fill="#fff" opacity=".22"/><rect x="1070.8" y="38.599999999999994" width="6.4" height="6.4" fill="#b4d0f4" opacity=".75"/><path d="M1068.8 39.8 V36.599999999999994 H1072 M1076 36.599999999999994 H1079.2 V39.8 M1079.2 43.8 V47.0 H1076 M1072 47.0 H1068.8 V43.8" stroke="#f00000" stroke-width="2.2" fill="none"/><ellipse cx="1125.2" cy="59.0" rx="11.7" ry="1.7" fill="#000" opacity=".11"/><path d="M1127.6 49.1 L1132.5 54.0" stroke="#8c8c86" stroke-width="2.4" stroke-linecap="round"/><path d="M1129.3 50.8 L1135.3 56.8" stroke="#676767" stroke-width="5" stroke-linecap="round"/><path d="M1130.5 50.0 L1136.1 55.6" stroke="#9a9a94" stroke-width="1.1" stroke-linecap="round"/><circle cx="1120.3" cy="41.8" r="11.5" fill="#e9e9e2" stroke="#a9a9a2" stroke-width="0.9"/><circle cx="1120.3" cy="41.8" r="9.6" fill="url(#lg)" stroke="#4d83cf" stroke-width="0.7"/><path d="M1111.3 40.8 A9.0 9.0 0 0 1 1129.3 40.8 Q1120.3 44.3 1111.3 40.8 Z" fill="#fff" opacity=".22"/><path d="M1112.6 41.8 L1119 36.199999999999996 V39.4 H1127.6 V44.199999999999996 H1119 V47.4 Z" fill="#fff"/><rect x="1154.4" y="30.6" width="27.2" height="17.4" rx="1" fill="#fff" stroke="#5a86d2" stroke-width="1"/><ellipse cx="1172.5" cy="59.6" rx="9.8" ry="1.7" fill="#000" opacity=".11"/><path d="M1174.3 50.9 L1178.0 54.6" stroke="#8c8c86" stroke-width="2.4" stroke-linecap="round"/><path d="M1174.8 51.4 L1180.8 57.4" stroke="#676767" stroke-width="5" stroke-linecap="round"/><path d="M1176.0 50.6 L1181.6 56.2" stroke="#9a9a94" stroke-width="1.1" stroke-linecap="round"/><circle cx="1168.4" cy="45" r="9.5" fill="#e9e9e2" stroke="#a9a9a2" stroke-width="0.9"/><circle cx="1168.4" cy="45" r="7.6" fill="url(#lg)" stroke="#4d83cf" stroke-width="0.7"/><path d="M1161.4 44 A6.999999999999999 6.999999999999999 0 0 1 1175.4 44 Q1168.4 47.5 1161.4 44 Z" fill="#fff" opacity=".22"/><ellipse cx="1218.0" cy="60.4" rx="11.7" ry="1.7" fill="#000" opacity=".11"/><path d="M1220.4 50.5 L1225.3 55.4" stroke="#8c8c86" stroke-width="2.4" stroke-linecap="round"/><path d="M1222.1 52.2 L1228.1 58.2" stroke="#676767" stroke-width="5" stroke-linecap="round"/><path d="M1223.3 51.4 L1228.9 57.0" stroke="#9a9a94" stroke-width="1.1" stroke-linecap="round"/><circle cx="1213.1" cy="43.2" r="11.5" fill="#e9e9e2" stroke="#a9a9a2" stroke-width="0.9"/><circle cx="1213.1" cy="43.2" r="9.6" fill="url(#lg)" stroke="#4d83cf" stroke-width="0.7"/><path d="M1204.1 42.2 A9.0 9.0 0 0 1 1222.1 42.2 Q1213.1 45.7 1204.1 42.2 Z" fill="#fff" opacity=".22"/><path transform="rotate(0 1213.1 43.2)" d="M1211.6999999999998 40.7 V35.0 H1209.1999999999998 L1213.1 29.6 L1217.0 35.0 H1214.5 V40.7 Z" fill="#fff" stroke="#6f9fe2" stroke-width=".5"/><path transform="rotate(90 1213.1 43.2)" d="M1211.6999999999998 40.7 V35.0 H1209.1999999999998 L1213.1 29.6 L1217.0 35.0 H1214.5 V40.7 Z" fill="#fff" stroke="#6f9fe2" stroke-width=".5"/><path transform="rotate(180 1213.1 43.2)" d="M1211.6999999999998 40.7 V35.0 H1209.1999999999998 L1213.1 29.6 L1217.0 35.0 H1214.5 V40.7 Z" fill="#fff" stroke="#6f9fe2" stroke-width=".5"/><path transform="rotate(270 1213.1 43.2)" d="M1211.6999999999998 40.7 V35.0 H1209.1999999999998 L1213.1 29.6 L1217.0 35.0 H1214.5 V40.7 Z" fill="#fff" stroke="#6f9fe2" stroke-width=".5"/></svg><svg style="left:78px;top:115px" width="10" height="10" viewBox="0 0 10 10" ><path d="M1 1 L9 9 M9 1 L1 9" stroke="#444" stroke-width="1"/></svg><svg style="left:94px;top:111px" width="18" height="18" viewBox="0 0 18 18" ><circle cx="8.2" cy="7.8" r="5.7" fill="#f4f4f8" stroke="#2c478f" stroke-width="2.1"/><path d="M4.6 7.8 H11.6 M8.2 4.4 V11.2" stroke="#e8b0b0" stroke-width=".7"/><path d="M8.6 8 L13.6 13" stroke="#f2b21c" stroke-width="1.7"/><circle cx="14" cy="13.4" r="1.2" fill="#e8707a"/></svg><div style="position:absolute;left:1127.6px;top:772.4px;width:25px;height:24.7px;background:linear-gradient(#f8f8f8,#e8e8e8);border:1px solid #a9a9a9;"></div><svg style="left:1133px;top:780px" width="15" height="11" viewBox="0 0 15 11" ><rect x=".6" y=".6" width="13.3" height="9.2" fill="#fff" stroke="#222" stroke-width=".9"/><rect x=".6" y=".6" width="13.3" height="2.8" fill="#111"/></svg><div style="position:absolute;left:1142.2px;top:750.3px;width:7.8px;height:16.5px;background:#7f7f7f;border-radius:3.9px;"></div><div style="position:absolute;left:7px;top:77px;width:2px;height:2px;background:#a6a6a6;"></div><div style="position:absolute;left:7px;top:83px;width:2px;height:2px;background:#a6a6a6;"></div><div style="position:absolute;left:7px;top:89px;width:2px;height:2px;background:#a6a6a6;"></div><div style="position:absolute;left:7px;top:95px;width:2px;height:2px;background:#a6a6a6;"></div><div style="position:absolute;left:14.6px;top:72.4px;width:44px;height:32.2px;background:linear-gradient(#e2e2e2,#f6f6f6 40%,#f2f2f2 60%,#d6d6d6);border:2px solid #8c8c8c;border-radius:6.5px;"></div><svg style="left:30.5px;top:78.7px" width="20" height="26" viewBox="0 0 20 26"><path transform="scale(0.89)" d="M0.6 0.8 L0.6 16.6 L4.3 13.4 L7.6 20.6 L10.4 19.4 L7.1 12.3 L11.9 12.1 Z" fill="#fff" stroke="#444" stroke-width="1.1" stroke-linejoin="round"/></svg><svg style="left:67.0px;top:71px" width="1" height="34"><line x1="0.5" y1="0" x2="0.5" y2="34" stroke="#555" stroke-width="1" stroke-dasharray="1 2.05"/></svg><svg style="left:85px;top:77px" width="22" height="22" viewBox="0 0 22 22" ><rect x="1.4" y="1.4" width="19.4" height="19.4" rx="2.8" fill="#e88a5c" stroke="#e2452c" stroke-width="1.5"/><path d="M6.4 6.4 L15.8 15.8 M15.8 6.4 L6.4 15.8" stroke="#fff" stroke-width="2.6"/></svg><svg style="left:128px;top:74px" width="30" height="28" viewBox="0 0 30 28" ><rect x="6.6" y="1.2" width="15.6" height="11" fill="#e6e6e6" stroke="#b4b4b4" stroke-width=".8"/><rect x="8.4" y="3" width="12" height="8" fill="#d4d4d4"/><path d="M14.4 4 L18.4 8 H16 V11 H12.8 V8 H10.4 Z" fill="#9a9a9a"/><path d="M1.4 14.6 Q1.4 11.8 4.4 11.8 H24.6 Q27.6 11.8 27.6 14.6 V21.6 Q27.6 24 25.2 24 H3.8 Q1.4 24 1.4 21.6 Z" fill="#ebebeb" stroke="#9c9c9c" stroke-width=".9"/><path d="M4.6 16.4 H24.4" stroke="#8a8a8a" stroke-width="1.6" stroke-linecap="round"/><path d="M1.6 19.8 H27.4 V21.6 Q27.4 23.8 25.2 23.8 H3.8 Q1.6 23.8 1.6 21.6 Z" fill="#cdcdcd"/><ellipse cx="14.5" cy="25.6" rx="12.4" ry="1.3" fill="#000" opacity=".16"/></svg><svg style="left:173px;top:71px" width="30" height="34" viewBox="0 0 30 34" ><defs><linearGradient id="pdfp" x1="0" y1="0" x2=".6" y2="1"><stop offset="0" stop-color="#dedede"/><stop offset="1" stop-color="#fbfbfb"/></linearGradient><linearGradient id="pdfb" x1="0" y1="0" x2="1" y2="0"><stop offset="0" stop-color="#e01818"/><stop offset=".55" stop-color="#c00c0c"/><stop offset="1" stop-color="#7a0000"/></linearGradient></defs><path d="M6.6 2 H22 L28.7 9.4 V31.4 H6.6 Z" fill="url(#pdfp)" stroke="#d4d4d4" stroke-width=".6"/><path d="M22 2 L23.4 8.2 L28.7 9.4 Z" fill="#fff" stroke="#d0d0d0" stroke-width=".4"/><rect x="1.2" y="15.7" width="23.8" height="10.1" fill="url(#pdfb)"/></svg><span class="t" style="left:176.60px;top:87px;font-size:10.3px;color:#fff;font-family:'Liberation Sans',sans-serif;letter-spacing:-0.600px;font-weight:bold;">PDF</span><svg style="left:214.8px;top:71px" width="1" height="34"><line x1="0.5" y1="0" x2="0.5" y2="34" stroke="#555" stroke-width="1" stroke-dasharray="1 2.05"/></svg><svg style="left:230px;top:74px" width="30" height="30" viewBox="0 0 30 30" ><rect x="1.6" y="1.4" width="15.4" height="21" rx="1" fill="#e6e6e6" stroke="#8e8e8e" stroke-width="1"/><circle cx="3.8" cy="9" r=".5" fill="#777"/><circle cx="3.8" cy="15" r=".5" fill="#777"/><path d="M11.6 27.6 Q8.4 24 7 20.6 Q6.2 18.4 7.8 17.8 Q9.4 17.6 10.4 19.4 L11.6 21.4 L10.6 11.6 Q10.5 9.9 12 9.8 Q13.5 9.8 13.7 11.4 L14.4 17.4 L14.6 9.4 Q14.7 7.8 16.2 7.9 Q17.7 8 17.7 9.6 L17.8 17.2 L19 10.6 Q19.3 9.1 20.8 9.4 Q22.2 9.8 22 11.4 L21.4 18 L23 14 Q23.6 12.7 24.9 13.2 Q26.1 13.8 25.7 15.2 Q24.4 20 24 23.6 Q23.6 26 22.4 27.6 Z" fill="#fff" stroke="#8c8c8c" stroke-width="1" stroke-linejoin="round"/></svg><svg style="left:277px;top:73px" width="26" height="30" viewBox="0 0 26 30" ><rect x="1.3" y="1.3" width="23.4" height="27.2" fill="#efefef" stroke="#8a8a8a" stroke-width="1"/><path d="M2 28.9 H25" stroke="#6e6e6e" stroke-width="1"/><rect x="5.5" y="6.1" width="15.2" height="17.7" fill="#ececec" stroke="#f01818" stroke-width="1.1"/></svg><svg style="left:324px;top:74px" width="25" height="28" viewBox="0 0 25 28" ><rect x=".3" y=".3" width="23.7" height="27.2" fill="#efa3a3"/><path d="M12.2 .3 V27.5 M.3 13.9 H24" stroke="#d88888" stroke-width="1.4"/><rect x="4.4" y="5.1" width="15.2" height="17.7" fill="none" stroke="#0a0af0" stroke-width="1.2"/></svg><svg style="left:369px;top:73px" width="26" height="30" viewBox="0 0 26 30" ><rect x="1.3" y="1.3" width="23.4" height="27.2" fill="#f0f0f0" stroke="#8a8a8a" stroke-width="1"/><path d="M2 28.9 H25" stroke="#6e6e6e" stroke-width="1"/><rect x="8.6" y="8.6" width="9.1" height="12.4" rx="1" fill="#d2d2ff" stroke="#3c3cff" stroke-width="1.5"/><path d="M11.4 4.4 H14.8 L13.1 6.6 Z M11.4 25 H14.8 L13.1 22.8 Z M4.4 13.1 V16.5 L6.6 14.8 Z M21.8 13.1 V16.5 L19.6 14.8 Z" fill="#f00"/></svg><svg style="left:409.0px;top:71px" width="1" height="34"><line x1="0.5" y1="0" x2="0.5" y2="34" stroke="#555" stroke-width="1" stroke-dasharray="1 2.05"/></svg><svg style="left:427px;top:74px" width="22" height="28" viewBox="0 0 22 28" ><rect x="1.3" y="1" width="19.5" height="25.9" rx="1.2" fill="url(#pg)" stroke="#6e6e6e" stroke-width="1.2"/><circle cx="4.3" cy="9.5" r=".9" fill="#555"/><circle cx="4.3" cy="18.3" r=".9" fill="#555"/></svg><div style="position:absolute;left:463.1px;top:70.2px;width:42.7px;height:37px;background:#b7b7b7;border-radius:5px;"></div><svg style="left:471px;top:78px" width="27" height="20" viewBox="0 0 27 20" ><rect x="1.2" y="1.4" width="24.7" height="17.8" rx="1.2" fill="url(#pg)" stroke="#6e6e6e" stroke-width="1.2"/><circle cx="9.5" cy="4.5" r=".9" fill="#555"/><circle cx="17.3" cy="4.5" r=".9" fill="#555"/></svg><svg style="left:512.0px;top:71px" width="1" height="34"><line x1="0.5" y1="0" x2="0.5" y2="34" stroke="#555" stroke-width="1" stroke-dasharray="1 2.05"/></svg><svg style="left:528px;top:74px" width="25" height="28" viewBox="0 0 25 28" ><rect x="1.3" y="1" width="22.5" height="26.3" rx="1.2" fill="url(#pg)" stroke="#767676" stroke-width="1.2"/></svg><span class="t" style="left:535.46px;top:79px;font-size:18.5px;color:#3c3c3c;font-family:'Liberation Sans',sans-serif;-webkit-text-stroke:0;">1</span><svg style="left:575px;top:74px" width="24" height="28" viewBox="0 0 24 28" ><rect x=".5" y=".7" width="22.8" height="26.6" fill="#fafafa" stroke="#b4b4b4" stroke-width=".8"/><path d="M8.1 .7 V27.3 M15.7 .7 V27.3 M.5 9.6 H23.3 M.5 18.5 H23.3" stroke="#9c9c9c" stroke-width="1.1"/></svg><svg style="left:0;top:68px;" width="1500" height="40" viewBox="0 68 1500 40"><rect x="619" y="74.4" width="27.8" height="17.4" fill="#fafafa" stroke="#8a8a8a" stroke-width="1"/><path d="M632.9 74.4 V91.8" stroke="#8a8a8a" stroke-width="1"/><ellipse cx="635.9" cy="102.0" rx="8.9" ry="1.7" fill="#000" opacity=".11"/><path d="M637.5 93.9 L640.6 97.0" stroke="#8c8c86" stroke-width="2.4" stroke-linecap="round"/><path d="M637.4 93.8 L643.4 99.8" stroke="#676767" stroke-width="5" stroke-linecap="round"/><path d="M638.6 93.0 L644.2 98.6" stroke="#9a9a94" stroke-width="1.1" stroke-linecap="round"/><circle cx="632.2" cy="88.6" r="8.700000000000001" fill="#e9e9e2" stroke="#a9a9a2" stroke-width="0.9"/><circle cx="632.2" cy="88.6" r="6.800000000000001" fill="url(#lg)" stroke="#4d83cf" stroke-width="0.7"/><path d="M626.0000000000001 87.6 A6.2 6.2 0 0 1 638.4 87.6 Q632.2 91.1 626.0000000000001 87.6 Z" fill="#fff" opacity=".22"/><path d="M632.4 81.5 V95.7 M625 88.8 H639.4" stroke="#c6dcf4" stroke-width=".9" opacity=".9"/></svg><svg style="left:659.8px;top:71px" width="1" height="34"><line x1="0.5" y1="0" x2="0.5" y2="34" stroke="#555" stroke-width="1" stroke-dasharray="1 2.05"/></svg><div style="position:absolute;left:668.2px;top:70.2px;width:42.7px;height:37px;background:#b7b7b7;border-radius:5px;"></div><div style="position:absolute;left:677.5px;top:81.9px;width:23.8px;height:12.9px;border:1px solid #4a2a1a;background:linear-gradient(90deg,#ff0000,#ff9800 12%,#ffff00 25%,#20e020 40%,#00e8e8 55%,#2030ff 70%,#e020e0 87%,#ff0060);"></div><div style="position:absolute;left:723px;top:80.6px;width:26px;height:14.8px;border:1px solid #555;background:linear-gradient(90deg,#fff,#000);box-shadow:0 1px 0 rgba(255,255,255,.5);"></div><div style="position:absolute;left:768.9px;top:80.6px;width:26px;height:14.8px;border:1px solid #444;background:linear-gradient(90deg,#000 52%,#fff 52%);"></div><svg style="left:809.0px;top:71px" width="1" height="34"><line x1="0.5" y1="0" x2="0.5" y2="34" stroke="#555" stroke-width="1" stroke-dasharray="1 2.05"/></svg><svg style="left:824px;top:81px" width="28" height="14" viewBox="0 0 28 14" ><path d="M1.2 7 H26.6" stroke="#555" stroke-width="1.5"/><path d="M9.4 1.3 H19.2 L14.3 6.6 Z M9.4 12.7 H19.2 L14.3 7.4 Z" fill="#000"/></svg><svg style="left:864.9px;top:71px" width="1" height="34"><line x1="0.5" y1="0" x2="0.5" y2="34" stroke="#555" stroke-width="1" stroke-dasharray="1 2.05"/></svg><div style="position:absolute;left:873.3px;top:70.2px;width:42.5px;height:37px;background:#b7b7b7;border-radius:5px;"></div><svg style="left:882px;top:76px" width="25" height="26" viewBox="0 0 25 26" ><rect x="1.5" y="1.2" width="21.7" height="23.2" rx="1" fill="url(#pg)"/><path d="M23.2 1.2 H1.5 V24.4" stroke="#666" stroke-width="1.2" fill="none"/><path d="M1.5 24.4 H23.2 V1.2" stroke="#777" stroke-width="1.3" fill="none" stroke-dasharray="3.4 2.6"/><path d="M2.6 24 L20.4 1.6 M5 24 L22.6 2" stroke="#555" stroke-width="1"/><circle cx="4.2" cy="9" r=".5" fill="#777"/><circle cx="4.2" cy="16.5" r=".5" fill="#777"/></svg><svg style="left:926px;top:74px" width="30" height="28" viewBox="0 0 30 28" ><path d="M1.2 14 H28.4 M14.8 .4 V27.5" stroke="#9a9aff" stroke-width="1.6"/><path d="M7.5 14 H22.4 M14.8 6.6 V21.4" stroke="#00007e" stroke-width="4.4"/></svg><svg style="left:967.8px;top:71px" width="1" height="34"><line x1="0.5" y1="0" x2="0.5" y2="34" stroke="#555" stroke-width="1" stroke-dasharray="1 2.05"/></svg><svg style="left:984px;top:72px" width="27" height="31" viewBox="0 0 27 31" ><rect x="1.3" y="1.4" width="23.5" height="27.2" fill="#f7f7f7" stroke="#b9b9b9" stroke-width=".8"/><path d="M1 29.2 H25.4" stroke="#777" stroke-width="1.3"/><path d="M7 20.6 L16.6 11" stroke="#3f72b4" stroke-width="3.2" stroke-linecap="round"/><path d="M6.4 10.6 Q5.4 7.6 8 6.2 L8.6 8.6 L10.6 8.6 L11.2 6.4 Q13 8 12 10.6 L20.8 19.4 Q21.6 20.8 20.4 21.6 Q19.2 22.4 18.2 21.2 L10 12.4 Q7.6 13 6.4 10.6 Z" fill="#d4d4d4" stroke="#8a8a8a" stroke-width=".7"/><path d="M14.4 6.6 Q18 5.4 21.4 9.8 L19.6 11.4 Q17.6 8.6 14.4 8.4 Z" fill="#2a2a2a"/></svg><svg style="left:1024.1px;top:71px" width="1" height="34"><line x1="0.5" y1="0" x2="0.5" y2="34" stroke="#555" stroke-width="1" stroke-dasharray="1 2.05"/></svg><div style="position:absolute;left:7px;top:116px;width:2px;height:2px;background:#a2a2a2;"></div><div style="position:absolute;left:13px;top:116px;width:2px;height:2px;background:#a2a2a2;"></div><div style="position:absolute;left:19px;top:116px;width:2px;height:2px;background:#a2a2a2;"></div><div style="position:absolute;left:25px;top:116px;width:2px;height:2px;background:#a2a2a2;"></div><div style="position:absolute;left:31px;top:116px;width:2px;height:2px;background:#a2a2a2;"></div><div style="position:absolute;left:37px;top:116px;width:2px;height:2px;background:#a2a2a2;"></div><div style="position:absolute;left:43px;top:116px;width:2px;height:2px;background:#a2a2a2;"></div><div style="position:absolute;left:49px;top:116px;width:2px;height:2px;background:#a2a2a2;"></div><div style="position:absolute;left:55px;top:116px;width:2px;height:2px;background:#a2a2a2;"></div><div style="position:absolute;left:61px;top:116px;width:2px;height:2px;background:#a2a2a2;"></div><div style="position:absolute;left:1.4px;top:122.3px;width:33.9px;height:33.9px;background:linear-gradient(#e4e4e4,#f2f2f2 35%,#f7f7f7 60%,#ededed);border:1px solid #9e9e9e;"></div><svg style="left:1.4px;top:122.3px" width="34" height="34" viewBox="0 0 34 34"><path d="M7 9.1 H13 M10 6.1 V12.1 M21.2 17.8 H27.2 M24.2 14.8 V20.8 M7.8 24.1 H13.8 M10.8 21.1 V27.1" stroke="#111" stroke-width="1.1" fill="none"/><path d="M24.6 29.6 H29.7 V24.5 Z" fill="#000"/></svg><div style="position:absolute;left:36.7px;top:122.3px;width:33.9px;height:33.9px;background:linear-gradient(#e4e4e4,#f2f2f2 35%,#f7f7f7 60%,#ededed);border:1px solid #9e9e9e;"></div><svg style="left:36.7px;top:122.3px" width="34" height="34" viewBox="0 0 34 34"><path d="M5 22 L28.5 11.6" stroke="#1e1e1e" stroke-width="1.15" fill="none" stroke-linecap="round"/><path d="M24.6 29.6 H29.7 V24.5 Z" fill="#000"/></svg><div style="position:absolute;left:1.4px;top:157.4px;width:33.9px;height:33.9px;background:linear-gradient(#e4e4e4,#f2f2f2 35%,#f7f7f7 60%,#ededed);border:1px solid #9e9e9e;"></div><svg style="left:1.4px;top:157.4px" width="34" height="34" viewBox="0 0 34 34"><path d="M6 25.6 C6.3 14 14 6.6 26 6.1" stroke="#1e1e1e" stroke-width="1.15" fill="none" stroke-linecap="round"/><path d="M24.6 29.6 H29.7 V24.5 Z" fill="#000"/></svg><div style="position:absolute;left:36.7px;top:157.4px;width:33.9px;height:33.9px;background:linear-gradient(#e4e4e4,#f2f2f2 35%,#f7f7f7 60%,#ededed);border:1px solid #9e9e9e;"></div><svg style="left:36.7px;top:157.4px" width="34" height="34" viewBox="0 0 34 34"><circle cx="16" cy="15.6" r="10" stroke="#1e1e1e" stroke-width="1.15" fill="none" stroke-linecap="round"/><path d="M24.6 29.6 H29.7 V24.5 Z" fill="#000"/></svg><div style="position:absolute;left:1.4px;top:192.4px;width:33.9px;height:33.9px;background:linear-gradient(#e4e4e4,#f2f2f2 35%,#f7f7f7 60%,#ededed);border:1px solid #9e9e9e;"></div><svg style="left:1.4px;top:192.4px" width="34" height="34" viewBox="0 0 34 34"><ellipse cx="16.6" cy="16.3" rx="13.3" ry="6.3" transform="rotate(-40 16.6 16.3)" stroke="#1e1e1e" stroke-width="1.15" fill="none" stroke-linecap="round"/><path d="M24.6 29.6 H29.7 V24.5 Z" fill="#000"/></svg><div style="position:absolute;left:36.7px;top:192.4px;width:33.9px;height:33.9px;background:linear-gradient(#e4e4e4,#f2f2f2 35%,#f7f7f7 60%,#ededed);border:1px solid #9e9e9e;"></div><svg style="left:36.7px;top:192.4px" width="34" height="34" viewBox="0 0 34 34"><path d="M5.6 9.4 C10 3.5 16 11 20 16.5 C23.5 21 27.5 20 27.3 14.5 C27 9 24 4.6 21.8 8.4 C18.8 13.5 15.5 27 11 24.5 C7.5 22.5 5.5 14 5.6 9.4 Z" stroke="#1e1e1e" stroke-width="1.15" fill="none" stroke-linecap="round"/><path d="M24.6 29.6 H29.7 V24.5 Z" fill="#000"/></svg><div style="position:absolute;left:1.4px;top:227.5px;width:33.9px;height:33.9px;background:linear-gradient(#e4e4e4,#f2f2f2 35%,#f7f7f7 60%,#ededed);border:1px solid #9e9e9e;"></div><svg style="left:1.4px;top:227.5px" width="34" height="34" viewBox="0 0 34 34"><path d="M12.1 11.4 A4.4 4.4 0 0 0 12.1 20.2 L25.6 20.2" stroke="#1e1e1e" stroke-width="1.15" fill="none" stroke-linecap="round"/><path d="M24.6 29.6 H29.7 V24.5 Z" fill="#000"/></svg><div style="position:absolute;left:36.7px;top:227.5px;width:33.9px;height:33.9px;background:linear-gradient(#e4e4e4,#f2f2f2 35%,#f7f7f7 60%,#ededed);border:1px solid #9e9e9e;"></div><svg style="left:36.7px;top:227.5px" width="34" height="34" viewBox="0 0 34 34"><path d="M3.7 10.5 L7.2 4.4 H14.2 L17.7 10.5 L14.2 16.6 H7.2 Z M24.5 8.8 L19.1 17.8 H29.6 Z M4.6 21.6 H18.5 V28 H4.6 Z" stroke="#1e1e1e" stroke-width="1.15" fill="none" stroke-linecap="round"/><path d="M25.6 29.6 H29.7 V25.5 Z" fill="#000"/></svg><div style="position:absolute;left:1.4px;top:262.6px;width:33.9px;height:33.9px;background:linear-gradient(#e4e4e4,#f2f2f2 35%,#f7f7f7 60%,#ededed);border:1px solid #9e9e9e;"></div><svg style="left:1.4px;top:262.6px" width="34" height="34" viewBox="0 0 34 34"><defs><clipPath id="hc"><path d="M6 17 L10.7 10.4 H26.6 V23.7 H6 Z"/></clipPath></defs><g clip-path="url(#hc)"><path d="M-6.0 23.7 L7.300000000000001 10.4" stroke="#666" stroke-width="0.7"/><path d="M-3.5999999999999996 23.7 L9.700000000000001 10.4" stroke="#666" stroke-width="0.7"/><path d="M-1.1999999999999993 23.7 L12.100000000000001 10.4" stroke="#666" stroke-width="0.7"/><path d="M1.2000000000000002 23.7 L14.5 10.4" stroke="#666" stroke-width="0.7"/><path d="M3.6 23.7 L16.900000000000002 10.4" stroke="#666" stroke-width="0.7"/><path d="M6.0 23.7 L19.3 10.4" stroke="#666" stroke-width="0.7"/><path d="M8.4 23.7 L21.700000000000003 10.4" stroke="#666" stroke-width="0.7"/><path d="M10.8 23.7 L24.1 10.4" stroke="#666" stroke-width="0.7"/><path d="M13.2 23.7 L26.5 10.4" stroke="#666" stroke-width="0.7"/><path d="M15.6 23.7 L28.9 10.4" stroke="#666" stroke-width="0.7"/><path d="M18.0 23.7 L31.3 10.4" stroke="#666" stroke-width="0.7"/><path d="M20.4 23.7 L33.7 10.4" stroke="#666" stroke-width="0.7"/><path d="M22.8 23.7 L36.1 10.4" stroke="#666" stroke-width="0.7"/><path d="M25.2 23.7 L38.5 10.4" stroke="#666" stroke-width="0.7"/></g><path d="M6 17 L10.7 10.4 H26.6 V23.7 H6 Z" stroke="#1e1e1e" stroke-width="1.15" fill="none" stroke-linecap="round"/><circle cx="19.5" cy="17.5" r="3.1" fill="#fff" stroke="#1e1e1e" stroke-width="1"/><path d="M24.6 29.6 H29.7 V24.5 Z" fill="#000"/></svg><div style="position:absolute;left:1.4px;top:305.5px;width:33.9px;height:33.9px;background:linear-gradient(#e4e4e4,#f2f2f2 35%,#f7f7f7 60%,#ededed);border:1px solid #9e9e9e;"></div><span class="t" style="left:7.80px;top:308px;font-size:29px;color:#111;font-family:'Liberation Serif',serif;-webkit-text-stroke:0.08px currentColor;">A</span><div style="position:absolute;left:36.7px;top:305.5px;width:33.9px;height:33.9px;background:linear-gradient(#e4e4e4,#f2f2f2 35%,#f7f7f7 60%,#ededed);border:1px solid #9e9e9e;"></div><svg style="left:36.7px;top:305.5px" width="34" height="34" viewBox="0 0 34 34"><path d="M6.7 8.1 V23.7 M25.5 8.1 V23.7 M6.7 9.9 H25.5" stroke="#1e1e1e" stroke-width="1.15" fill="none" stroke-linecap="round"/><path d="M6.7 9.9 L10.4 8.5 V11.3 Z M25.5 9.9 L21.8 8.5 V11.3 Z" fill="#111"/><path d="M24.6 29.6 H29.7 V24.5 Z" fill="#000"/></svg><div style="position:absolute;left:1.4px;top:340.6px;width:33.9px;height:33.9px;background:linear-gradient(#e4e4e4,#f2f2f2 35%,#f7f7f7 60%,#ededed);border:1px solid #9e9e9e;"></div><svg style="left:1.4px;top:340.6px" width="34" height="34" viewBox="0 0 34 34"><rect x="5.6" y="7.2" width="22.6" height="17.3" rx="1" fill="#fff" stroke="#111" stroke-width="1.3"/><path d="M8.2 21.8 L13.4 15.5 L16.4 18.6 L19.6 15.9 L25.8 21.8 Z" fill="#000"/><circle cx="23.2" cy="11.6" r="1.7" fill="#000"/></svg><div style="position:absolute;left:1.4px;top:383.6px;width:33.9px;height:33.9px;background:linear-gradient(#e4e4e4,#f2f2f2 35%,#f7f7f7 60%,#ededed);border:1px solid #9e9e9e;"></div><svg style="left:1.4px;top:383.6px" width="34" height="34" viewBox="0 0 34 34"><path d="M4.4 28.3 V9.8 L24 28.3 Z M7.6 24.6 V18.6 L13.6 24.6 Z" stroke="#111" stroke-width="1.1" fill="#fff" fill-rule="evenodd"/><path d="M9.5 3.6 L12.8 2.2 L20 11.5 L17.8 13.2 Z" fill="#d8241c" stroke="#8a1a12" stroke-width="0.5"/><path d="M17.8 13.2 L20 11.5 L20.6 14.8 Z" fill="#e8c89a"/><path d="M26.2 4 L23 20.5 M26.2 4 L29.3 20.5 M25.2 3 h2" stroke="#111" stroke-width="1" fill="none"/><path d="M25 29.6 H29.7 V24.9 Z" fill="#000"/></svg><div style="position:absolute;left:36.7px;top:383.6px;width:33.9px;height:33.9px;background:linear-gradient(#e4e4e4,#f2f2f2 35%,#f7f7f7 60%,#ededed);border:1px solid #9e9e9e;"></div><svg style="left:36.7px;top:383.6px" width="34" height="34" viewBox="0 0 34 34"><rect x="4.4" y="12.1" width="23.8" height="7.8" rx="1.2" fill="#fbfbfb" stroke="#555" stroke-width="1"/><path d="M8.05 12.3 v1.8" stroke="#444" stroke-width="0.6"/><path d="M10.1 12.3 v1.8" stroke="#444" stroke-width="0.6"/><path d="M12.149999999999999 12.3 v1.8" stroke="#444" stroke-width="0.6"/><path d="M14.2 12.3 v1.8" stroke="#444" stroke-width="0.6"/><path d="M16.25 12.3 v3.2" stroke="#444" stroke-width="0.6"/><path d="M18.299999999999997 12.3 v1.8" stroke="#444" stroke-width="0.6"/><path d="M20.349999999999998 12.3 v1.8" stroke="#444" stroke-width="0.6"/><path d="M22.4 12.3 v1.8" stroke="#444" stroke-width="0.6"/><path d="M24.45 12.3 v1.8" stroke="#444" stroke-width="0.6"/><path d="M26.5 12.3 v3.2" stroke="#444" stroke-width="0.6"/></svg><div style="position:absolute;left:1.4px;top:418.6px;width:33.9px;height:33.9px;background:linear-gradient(#e4e4e4,#f2f2f2 35%,#f7f7f7 60%,#ededed);border:1px solid #9e9e9e;"></div><svg style="left:1.4px;top:418.6px" width="34" height="34" viewBox="0 0 34 34"><rect x="6.4" y="6.6" width="16.6" height="12.3" fill="#fdf1c4" stroke="#222" stroke-width="1"/><circle cx="20.5" cy="18" r="7" fill="#fdf1c4" stroke="#222" stroke-width="1"/><path d="M6.4 6.6 H23 V18.9 H6.4 Z" fill="none" stroke="#222" stroke-width="1"/><circle cx="6.4" cy="19.2" r="1.5" fill="#e11"/></svg><div style="position:absolute;left:36.7px;top:418.6px;width:33.9px;height:33.9px;background:linear-gradient(#e4e4e4,#f2f2f2 35%,#f7f7f7 60%,#ededed);border:1px solid #9e9e9e;"></div><svg style="left:36.7px;top:418.6px" width="34" height="34" viewBox="0 0 34 34"><path d="M5.4 15 L22 5.7" stroke="#e8222a" stroke-width="1.2"/><path d="M14.8 10.8 L14.8 21.4 L17.3 19.2 L19.4 23.9 L21.3 23 L19.2 18.4 L22.4 18.3 Z" fill="#f4f4f4" stroke="#777" stroke-width="0.9"/><path d="M24.6 29.6 H29.7 V24.5 Z" fill="#000"/></svg><div style="position:absolute;left:1.4px;top:461.5px;width:33.9px;height:33.9px;background:linear-gradient(#e4e4e4,#f2f2f2 35%,#f7f7f7 60%,#ededed);border:1px solid #9e9e9e;"></div><svg style="left:1.4px;top:461.5px" width="34" height="34" viewBox="0 0 34 34"><path d="M5.4 12.6 L18.4 6.2 L28 11.2 L28 21.6 L15.2 28.2 L5.4 22.8 Z M5.4 12.6 L15.2 17.8 L28 11.2 M15.2 17.8 V28.2" stroke="#1e1e1e" stroke-width="1.15" fill="none" stroke-linecap="round" stroke-linejoin="round"/><path d="M24.6 29.6 H29.7 V24.5 Z" fill="#000"/></svg><div style="position:absolute;left:1462px;top:116px;width:2px;height:2px;background:#a0a0a0;"></div><div style="position:absolute;left:1468px;top:116px;width:2px;height:2px;background:#a0a0a0;"></div><div style="position:absolute;left:1474px;top:116px;width:2px;height:2px;background:#a0a0a0;"></div><div style="position:absolute;left:1480px;top:116px;width:2px;height:2px;background:#a0a0a0;"></div><div style="position:absolute;left:1486px;top:116px;width:2px;height:2px;background:#a0a0a0;"></div><div style="position:absolute;left:1456.4px;top:120.3px;width:42.3px;height:42px;background:#b5b5b5;border-radius:5px;"></div><svg style="left:1463px;top:127.2px" width="29" height="28" viewBox="0 0 29 28" ><rect x=".6" y=".6" width="27.4" height="26.6" fill="#fff" stroke="#4a4a4a" stroke-width=".9"/><rect x=".6" y=".6" width="27.4" height="4.3" fill="#000"/><rect x="1.4" y="1.3" width="2.8" height="2.8" fill="#fff"/><path d="M7.4 13 L14.4 9.6 V20.6 L7.4 24 Z" fill="#c9c9c9" stroke="#555" stroke-width=".7"/><path d="M9.6 12.4 L16.6 9 V20 L9.6 23.4 Z" fill="#ddd" stroke="#555" stroke-width=".7"/><path d="M12 11.6 L19.8 8 V19.4 L12 23 Z" fill="#f4f4f4" stroke="#555" stroke-width=".7"/><path d="M14 20.4 L17.6 11.6 L18.2 18.4 Z" fill="none" stroke="#e02020" stroke-width=".9"/></svg><div style="position:absolute;left:1456.4px;top:167.1px;width:42.3px;height:42px;background:#b5b5b5;border-radius:5px;"></div><svg style="left:1463px;top:174px" width="29" height="28" viewBox="0 0 29 28" ><rect x=".6" y=".6" width="27.4" height="26.6" fill="#fff" stroke="#4a4a4a" stroke-width=".9"/><rect x=".6" y=".6" width="27.4" height="4.3" fill="#000"/><rect x="1.4" y="1.3" width="2.8" height="2.8" fill="#fff"/><rect x="6.6" y="9.4" width="9.6" height="8.2" fill="#f7ecc0" stroke="#555" stroke-width=".8"/><circle cx="15.6" cy="17.2" r="4.4" fill="#f7ecc0" stroke="#555" stroke-width=".8"/><path d="M6.6 9.4 H16.2 V17.6 H6.6 Z" fill="none" stroke="#555" stroke-width=".8"/></svg><svg style="left:1463px;top:221.2px" width="29" height="28" viewBox="0 0 29 28" ><rect x=".6" y=".6" width="27.4" height="26.6" fill="#fff" stroke="#4a4a4a" stroke-width=".9"/><rect x=".6" y=".6" width="27.4" height="4.3" fill="#000"/><rect x="1.4" y="1.3" width="2.8" height="2.8" fill="#fff"/><rect x="5.4" y="10.2" width="17.4" height="11.4" rx="2.8" fill="#f1f1f1" stroke="#bcd0ee" stroke-width="1.1"/></svg><svg style="left:1457.5px;top:262px" width="42" height="1"><line x1="0" y1=".5" x2="42" y2=".5" stroke="#666" stroke-width="1" stroke-dasharray="1 2.05"/></svg><svg style="left:1463px;top:277px" width="29" height="28" viewBox="0 0 29 28" ><rect x=".6" y=".6" width="27.4" height="26.6" fill="#fff" stroke="#4a4a4a" stroke-width=".9"/><rect x=".6" y=".6" width="27.4" height="4.3" fill="#000"/><rect x="1.4" y="1.3" width="2.8" height="2.8" fill="#fff"/><rect x="3.4" y="8.6" width="3.6" height="3" fill="#000"/><rect x="3.4" y="14.4" width="3.6" height="3" fill="#000"/><rect x="3.4" y="20.2" width="3.6" height="3" fill="#000"/><rect x="9.4" y="8.6" width="15" height="3" fill="#fff" stroke="#555" stroke-width=".7"/><rect x="9.4" y="14.4" width="15" height="3" fill="#fff" stroke="#555" stroke-width=".7"/><rect x="9.4" y="20.2" width="15" height="3" fill="#fff" stroke="#555" stroke-width=".7"/></svg><svg style="left:1463px;top:323.3px" width="29" height="28" viewBox="0 0 29 28" ><rect x=".6" y=".6" width="27.4" height="26.6" fill="#fff" stroke="#4a4a4a" stroke-width=".9"/><rect x=".6" y=".6" width="27.4" height="4.3" fill="#000"/><rect x="1.4" y="1.3" width="2.8" height="2.8" fill="#fff"/><path d="M6.4 8.6 H21.8 L15.8 15.4 V23.6 H12.6 V15.4 Z" fill="#a8a8a8" stroke="#555" stroke-width=".8"/><ellipse cx="14.1" cy="8.8" rx="7.7" ry="1.3" fill="#d8d8d8" stroke="#555" stroke-width=".6"/></svg><svg style="left:1463px;top:369.2px" width="29" height="28" viewBox="0 0 29 28" ><rect x=".6" y=".6" width="27.4" height="26.6" fill="#fff" stroke="#4a4a4a" stroke-width=".9"/><rect x=".6" y=".6" width="27.4" height="4.3" fill="#000"/><rect x="1.4" y="1.3" width="2.8" height="2.8" fill="#fff"/><path d="M4 14.6 H25" stroke="#f0a0a0" stroke-width="1.2" stroke-dasharray="3 1.2"/><path d="M6.6 8 L11.6 11 V18.6 L6.6 21.6 Z" fill="#f0f0f0" stroke="#333" stroke-width=".8"/><rect x="11.6" y="10.8" width="10" height="7.8" rx="1" fill="#8c8c8c" stroke="#444" stroke-width=".6"/><path d="M13.4 10.8 V18.6 M15.4 10.8 V18.6 M17.4 10.8 V18.6 M19.4 10.8 V18.6" stroke="#bdbdbd" stroke-width=".6"/></svg><svg style="left:1457.5px;top:410px" width="42" height="1"><line x1="0" y1=".5" x2="42" y2=".5" stroke="#666" stroke-width="1" stroke-dasharray="1 2.05"/></svg><div style="position:absolute;left:1456.4px;top:418.5px;width:42.3px;height:42px;background:#b5b5b5;border-radius:5px;"></div><svg style="left:1463px;top:425.4px" width="29" height="28" viewBox="0 0 29 28" ><rect x=".6" y=".6" width="27.4" height="26.6" fill="#fff" stroke="#4a4a4a" stroke-width=".9"/><rect x=".6" y=".6" width="27.4" height="4.3" fill="#000"/><rect x="1.4" y="1.3" width="2.8" height="2.8" fill="#fff"/><path d="M3 9.4 H12 M3 12.2 H11 M3 15 H13 M3 17.8 H12.6" stroke="#777" stroke-width=".9" stroke-dasharray="2.2 .6"/><path d="M.6 22.4 H28" stroke="#444" stroke-width=".8"/><path d="M3 24.8 H5 M9 24.8 H24" stroke="#222" stroke-width="1.1"/></svg><svg style="left:1463px;top:471.8px" width="29" height="28" viewBox="0 0 29 28" ><rect x=".6" y=".6" width="27.4" height="26.6" fill="#fff" stroke="#4a4a4a" stroke-width=".9"/><rect x=".6" y=".6" width="27.4" height="4.3" fill="#000"/><rect x="1.4" y="1.3" width="2.8" height="2.8" fill="#fff"/><rect x="7" y="9.2" width="14.4" height="16" rx="1" fill="#c8903e" stroke="#8a5a1a" stroke-width=".8"/><rect x="9" y="11.6" width="10.4" height="12" fill="#f4f4f4"/><path d="M19.4 20.4 L16.2 23.6 H19.4 Z" fill="#aaa"/><rect x="11" y="7.6" width="6.4" height="3.6" rx=".8" fill="#a6a6a0" stroke="#666" stroke-width=".6"/><path d="M10.6 15 H17.6 M10.6 17.4 H17.6 M10.6 19.8 H15" stroke="#ccc" stroke-width=".8"/></svg><div style="position:absolute;left:1154px;top:108px;width:301px;height:22.5px;background:linear-gradient(#f0f0f0,#dedede);border-bottom:1px solid #c2c2c2;"></div><svg style="left:1156.5px;top:110.5px" width="34" height="15" viewBox="0 0 34 15"><circle cx="7.4" cy="7.5" r="6.9" fill="#6a6a6a"/><path d="M4.6 4.7 L10.2 10.3 M10.2 4.7 L4.6 10.3" stroke="#fff" stroke-width="2" stroke-linecap="round"/><circle cx="25.4" cy="7.5" r="6.9" fill="#6a6a6a"/><rect x="23.6" y="4.3" width="5.4" height="4.4" rx="1" fill="none" stroke="#fff" stroke-width="1.2"/><rect x="21.6" y="6.4" width="5.4" height="4.4" rx="1" fill="#6a6a6a" stroke="#fff" stroke-width="1.2"/></svg><span class="t" style="left:1274.20px;top:114px;font-size:11.3px;color:#222;font-family:'Liberation Sans',sans-serif;letter-spacing:0.289px;">Elenco dei blocchi</span><div style="position:absolute;left:1154px;top:130px;width:301px;height:26.3px;background:#b3b3b3;"></div><div style="position:absolute;left:1155.5px;top:130.6px;width:36.474999999999994px;height:24.4px;background:linear-gradient(#f2f2f2,#fbfbfb 30%,#f4f4f4 60%,#e6e6e6);"></div><div style="position:absolute;left:1193.675px;top:130.6px;width:35.675px;height:24.4px;background:linear-gradient(#f2f2f2,#fbfbfb 30%,#f4f4f4 60%,#e6e6e6);"></div><div style="position:absolute;left:1231.05px;top:130.6px;width:35.675px;height:24.4px;background:linear-gradient(#f2f2f2,#fbfbfb 30%,#f4f4f4 60%,#e6e6e6);"></div><div style="position:absolute;left:1268.425px;top:130.6px;width:35.675px;height:24.4px;background:linear-gradient(#f2f2f2,#fbfbfb 30%,#f4f4f4 60%,#e6e6e6);"></div><div style="position:absolute;left:1305.8px;top:130.6px;width:35.675px;height:24.4px;background:linear-gradient(#f2f2f2,#fbfbfb 30%,#f4f4f4 60%,#e6e6e6);"></div><div style="position:absolute;left:1343.175px;top:130.6px;width:35.675px;height:24.4px;background:linear-gradient(#f2f2f2,#fbfbfb 30%,#f4f4f4 60%,#e6e6e6);"></div><div style="position:absolute;left:1380.55px;top:130.6px;width:35.675px;height:24.4px;background:linear-gradient(#f2f2f2,#fbfbfb 30%,#f4f4f4 60%,#e6e6e6);"></div><div style="position:absolute;left:1417.925px;top:130.6px;width:35.675px;height:24.4px;background:linear-gradient(#f2f2f2,#fbfbfb 30%,#f4f4f4 60%,#e6e6e6);"></div><svg style="left:1165.1px;top:136.1px;opacity:1" width="18" height="14" viewBox="-9 -7 18 14"><g transform="scale(1.0)"><path d="M-7.4 0.6 C-6.4 -2.6 -3.4 -5.5 0.3 -5.5 C3.6 -5.5 6.3 -3.6 7.3 -0.5 C7 0.6 6.6 1.4 6 2.2 C4.6 4.4 2.6 5.5 0.1 5.5 C-1.6 5.6 -3.2 5 -4.4 4 C-5.8 3 -6.8 1.9 -7.4 0.6 Z" fill="#000"/><path d="M-4.9 0.6 C-4 -1.6 -2 -3 0.3 -3 C2.5 -3 4.2 -1.8 5 0 C4 2.4 2.3 3.5 0.2 3.5 C-2.1 3.5 -3.9 2.4 -4.9 0.6 Z" fill="#fff"/><circle cx="0.2" cy="0.1" r="2.9" fill="#000"/><circle cx="-0.9" cy="-1.1" r="0.75" fill="#fff"/></g></svg><svg style="left:1202.5px;top:136.1px;opacity:1" width="18" height="14" viewBox="-9 -7 18 14"><g transform="scale(1.0)"><path d="M-7.4 0.6 C-6.4 -2.6 -3.4 -5.5 0.3 -5.5 C3.6 -5.5 6.3 -3.6 7.3 -0.5 C7 0.6 6.6 1.4 6 2.2 C4.6 4.4 2.6 5.5 0.1 5.5 C-1.6 5.6 -3.2 5 -4.4 4 C-5.8 3 -6.8 1.9 -7.4 0.6 Z" fill="#a6a6a6"/><path d="M-4.9 0.6 C-4 -1.6 -2 -3 0.3 -3 C2.5 -3 4.2 -1.8 5 0 C4 2.4 2.3 3.5 0.2 3.5 C-2.1 3.5 -3.9 2.4 -4.9 0.6 Z" fill="#fff"/><circle cx="0.2" cy="0.1" r="2.9" fill="#a6a6a6"/><circle cx="-0.9" cy="-1.1" r="0.75" fill="#fff"/></g></svg><svg style="left:1241.8875px;top:136.1px" width="14" height="14"><path d="M5.3 1 H8.7 V5.3 H13 V8.7 H8.7 V13 H5.3 V8.7 H1 V5.3 H5.3 Z" fill="#f40000" stroke="#b00000" stroke-width=".6"/></svg><svg style="left:1279.2625px;top:136.1px" width="14" height="14"><rect x="1" y="5.3" width="12" height="3.4" fill="#f40000" stroke="#b00000" stroke-width=".6"/></svg><span class="t" style="left:1316.04px;top:137px;font-size:12px;color:#222;font-family:'Liberation Sans',sans-serif;">a</span><span class="t" style="left:1325.24px;top:137px;font-size:12px;color:#222;font-family:'Liberation Sans',sans-serif;">b</span><div style="position:absolute;left:1323.2375px;top:136.6px;width:1px;height:13px;background:#555;"></div><svg style="left:1353.0px;top:135.1px" width="16" height="16" viewBox="0 0 16 16"><g transform="translate(8 8.3) rotate(-42)"><rect x="-6.4" y="-1.4" width="13.2" height="2.8" fill="#e2b054" stroke="#a47a30" stroke-width=".45"/><path d="M-6.4 -0.4 H6.8" stroke="#f4d590" stroke-width=".9"/><rect x="6.8" y="-1.4" width="2.8" height="2.8" rx=".7" fill="#e6454e"/><path d="M-6.4 -1.4 L-9.6 0 L-6.4 1.4 Z" fill="#efdcb6" stroke="#a47a30" stroke-width=".3"/><path d="M-8.5 -0.55 L-9.7 0 L-8.5 .55 Z" fill="#333"/></g></svg><svg style="left:1391.3875px;top:135.1px" width="14" height="16"><rect x="1" y="1.5" width="12" height="12.5" fill="#e3e8f4" stroke="#d4d8e4" stroke-width=".5"/><path d="M3.6 3 C8.6 2.6 9.8 5 9.6 8.6 H12 L8.4 13 L5 8.6 H7.2 C7.4 6 6.6 5.2 3.6 5.2 Z" fill="#7f9ff4" stroke="#6a8ae8" stroke-width="0.4"/></svg><svg style="left:1430.2625px;top:137.6px" width="11" height="11"><rect x="0.6" y="0.6" width="9.8" height="9.8" rx="1.2" fill="#e9805e" stroke="#e0553a" stroke-width="0.9"/><path d="M3 3 L8 8 M8 3 L3 8" stroke="#fff" stroke-width="1.5"/></svg><div style="position:absolute;left:1155.5px;top:156.5px;width:298.5px;height:170.6px;background:#fff;border-bottom:1.5px solid #b4b4b4;"></div><div style="position:absolute;left:1155.5px;top:197px;width:298.5px;height:20px;background:#d4d4d4;"></div><span class="t" style="left:1204.80px;top:161px;font-size:13px;color:#000;font-family:'Liberation Sans',sans-serif;letter-spacing:0.251px;">Model (*Model_Space)</span><svg style="left:1160.3px;top:160.1px;opacity:1" width="18" height="14" viewBox="-9 -7 18 14"><g transform="scale(1.0)"><path d="M-7.4 0.6 C-6.4 -2.6 -3.4 -5.5 0.3 -5.5 C3.6 -5.5 6.3 -3.6 7.3 -0.5 C7 0.6 6.6 1.4 6 2.2 C4.6 4.4 2.6 5.5 0.1 5.5 C-1.6 5.6 -3.2 5 -4.4 4 C-5.8 3 -6.8 1.9 -7.4 0.6 Z" fill="#000"/><path d="M-4.9 0.6 C-4 -1.6 -2 -3 0.3 -3 C2.5 -3 4.2 -1.8 5 0 C4 2.4 2.3 3.5 0.2 3.5 C-2.1 3.5 -3.9 2.4 -4.9 0.6 Z" fill="#fff"/><circle cx="0.2" cy="0.1" r="2.9" fill="#000"/><circle cx="-0.9" cy="-1.1" r="0.75" fill="#fff"/></g></svg><span class="t" style="left:1204.80px;top:181px;font-size:13px;color:#000;font-family:'Liberation Sans',sans-serif;letter-spacing:0.087px;">Layout1 (*Paper_Space)</span><svg style="left:1160.3px;top:180.1px;opacity:1" width="18" height="14" viewBox="-9 -7 18 14"><g transform="scale(1.0)"><path d="M-7.4 0.6 C-6.4 -2.6 -3.4 -5.5 0.3 -5.5 C3.6 -5.5 6.3 -3.6 7.3 -0.5 C7 0.6 6.6 1.4 6 2.2 C4.6 4.4 2.6 5.5 0.1 5.5 C-1.6 5.6 -3.2 5 -4.4 4 C-5.8 3 -6.8 1.9 -7.4 0.6 Z" fill="#000"/><path d="M-4.9 0.6 C-4 -1.6 -2 -3 0.3 -3 C2.5 -3 4.2 -1.8 5 0 C4 2.4 2.3 3.5 0.2 3.5 C-2.1 3.5 -3.9 2.4 -4.9 0.6 Z" fill="#fff"/><circle cx="0.2" cy="0.1" r="2.9" fill="#000"/><circle cx="-0.9" cy="-1.1" r="0.75" fill="#fff"/></g></svg><span class="t" style="left:1204.80px;top:201px;font-size:13px;color:#000;font-family:'Liberation Sans',sans-serif;letter-spacing:0.177px;">Layout2 (*Paper_Space0)</span><svg style="left:1160.3px;top:200.1px;opacity:1" width="18" height="14" viewBox="-9 -7 18 14"><g transform="scale(1.0)"><path d="M-7.4 0.6 C-6.4 -2.6 -3.4 -5.5 0.3 -5.5 C3.6 -5.5 6.3 -3.6 7.3 -0.5 C7 0.6 6.6 1.4 6 2.2 C4.6 4.4 2.6 5.5 0.1 5.5 C-1.6 5.6 -3.2 5 -4.4 4 C-5.8 3 -6.8 1.9 -7.4 0.6 Z" fill="#3d4a5c"/><path d="M-4.9 0.6 C-4 -1.6 -2 -3 0.3 -3 C2.5 -3 4.2 -1.8 5 0 C4 2.4 2.3 3.5 0.2 3.5 C-2.1 3.5 -3.9 2.4 -4.9 0.6 Z" fill="#d4d4d4"/><circle cx="0.2" cy="0.1" r="2.9" fill="#3d4a5c"/><circle cx="-0.9" cy="-1.1" r="0.75" fill="#d4d4d4"/></g></svg><span class="t" style="left:1204.80px;top:221px;font-size:13px;color:#000;font-family:'Liberation Sans',sans-serif;letter-spacing:0.202px;">Bordo</span><svg style="left:1160.3px;top:220.1px;opacity:1" width="18" height="14" viewBox="-9 -7 18 14"><g transform="scale(1.0)"><path d="M-7.4 0.6 C-6.4 -2.6 -3.4 -5.5 0.3 -5.5 C3.6 -5.5 6.3 -3.6 7.3 -0.5 C7 0.6 6.6 1.4 6 2.2 C4.6 4.4 2.6 5.5 0.1 5.5 C-1.6 5.6 -3.2 5 -4.4 4 C-5.8 3 -6.8 1.9 -7.4 0.6 Z" fill="#000"/><path d="M-4.9 0.6 C-4 -1.6 -2 -3 0.3 -3 C2.5 -3 4.2 -1.8 5 0 C4 2.4 2.3 3.5 0.2 3.5 C-2.1 3.5 -3.9 2.4 -4.9 0.6 Z" fill="#fff"/><circle cx="0.2" cy="0.1" r="2.9" fill="#000"/><circle cx="-0.9" cy="-1.1" r="0.75" fill="#fff"/></g></svg><svg style="left:1183.0px;top:198.8px" width="16" height="16" viewBox="0 0 16 16"><g transform="translate(8 8.3) rotate(-42)"><rect x="-6.4" y="-1.4" width="13.2" height="2.8" fill="#e2b054" stroke="#a47a30" stroke-width=".45"/><path d="M-6.4 -0.4 H6.8" stroke="#f4d590" stroke-width=".9"/><rect x="6.8" y="-1.4" width="2.8" height="2.8" rx=".7" fill="#e6454e"/><path d="M-6.4 -1.4 L-9.6 0 L-6.4 1.4 Z" fill="#efdcb6" stroke="#a47a30" stroke-width=".3"/><path d="M-8.5 -0.55 L-9.7 0 L-8.5 .55 Z" fill="#333"/></g></svg><div style="position:absolute;left:1154px;top:327.5px;width:301px;height:23px;background:linear-gradient(#f0f0f0,#dedede);border-bottom:1px solid #c2c2c2;"></div><svg style="left:1156.5px;top:330.5px" width="34" height="15" viewBox="0 0 34 15"><circle cx="7.4" cy="7.5" r="6.9" fill="#6a6a6a"/><path d="M4.6 4.7 L10.2 10.3 M10.2 4.7 L4.6 10.3" stroke="#fff" stroke-width="2" stroke-linecap="round"/><circle cx="25.4" cy="7.5" r="6.9" fill="#6a6a6a"/><rect x="23.6" y="4.3" width="5.4" height="4.4" rx="1" fill="none" stroke="#fff" stroke-width="1.2"/><rect x="21.6" y="6.4" width="5.4" height="4.4" rx="1" fill="#6a6a6a" stroke="#fff" stroke-width="1.2"/></svg><span class="t" style="left:1280.20px;top:334px;font-size:11.3px;color:#222;font-family:'Liberation Sans',sans-serif;letter-spacing:0.235px;">Elenco dei livelli</span><div style="position:absolute;left:1154px;top:350px;width:301px;height:26.3px;background:#b3b3b3;"></div><div style="position:absolute;left:1155.5px;top:350.6px;width:58.89999999999999px;height:24.4px;background:linear-gradient(#f2f2f2,#fbfbfb 30%,#f4f4f4 60%,#e6e6e6);"></div><div style="position:absolute;left:1216.1px;top:350.6px;width:58.099999999999994px;height:24.4px;background:linear-gradient(#f2f2f2,#fbfbfb 30%,#f4f4f4 60%,#e6e6e6);"></div><div style="position:absolute;left:1275.8999999999999px;top:350.6px;width:58.099999999999994px;height:24.4px;background:linear-gradient(#f2f2f2,#fbfbfb 30%,#f4f4f4 60%,#e6e6e6);"></div><div style="position:absolute;left:1335.7px;top:350.6px;width:58.099999999999994px;height:24.4px;background:linear-gradient(#f2f2f2,#fbfbfb 30%,#f4f4f4 60%,#e6e6e6);"></div><div style="position:absolute;left:1395.5px;top:350.6px;width:58.099999999999994px;height:24.4px;background:linear-gradient(#f2f2f2,#fbfbfb 30%,#f4f4f4 60%,#e6e6e6);"></div><svg style="left:1176.4px;top:356.1px;opacity:1" width="18" height="14" viewBox="-9 -7 18 14"><g transform="scale(1.0)"><path d="M-7.4 0.6 C-6.4 -2.6 -3.4 -5.5 0.3 -5.5 C3.6 -5.5 6.3 -3.6 7.3 -0.5 C7 0.6 6.6 1.4 6 2.2 C4.6 4.4 2.6 5.5 0.1 5.5 C-1.6 5.6 -3.2 5 -4.4 4 C-5.8 3 -6.8 1.9 -7.4 0.6 Z" fill="#000"/><path d="M-4.9 0.6 C-4 -1.6 -2 -3 0.3 -3 C2.5 -3 4.2 -1.8 5 0 C4 2.4 2.3 3.5 0.2 3.5 C-2.1 3.5 -3.9 2.4 -4.9 0.6 Z" fill="#fff"/><circle cx="0.2" cy="0.1" r="2.9" fill="#000"/><circle cx="-0.9" cy="-1.1" r="0.75" fill="#fff"/></g></svg><svg style="left:1236.2px;top:356.1px;opacity:1" width="18" height="14" viewBox="-9 -7 18 14"><g transform="scale(1.0)"><path d="M-7.4 0.6 C-6.4 -2.6 -3.4 -5.5 0.3 -5.5 C3.6 -5.5 6.3 -3.6 7.3 -0.5 C7 0.6 6.6 1.4 6 2.2 C4.6 4.4 2.6 5.5 0.1 5.5 C-1.6 5.6 -3.2 5 -4.4 4 C-5.8 3 -6.8 1.9 -7.4 0.6 Z" fill="#a6a6a6"/><path d="M-4.9 0.6 C-4 -1.6 -2 -3 0.3 -3 C2.5 -3 4.2 -1.8 5 0 C4 2.4 2.3 3.5 0.2 3.5 C-2.1 3.5 -3.9 2.4 -4.9 0.6 Z" fill="#fff"/><circle cx="0.2" cy="0.1" r="2.9" fill="#a6a6a6"/><circle cx="-0.9" cy="-1.1" r="0.75" fill="#fff"/></g></svg><svg style="left:1297.95px;top:356.1px" width="14" height="14"><path d="M5.3 1 H8.7 V5.3 H13 V8.7 H8.7 V13 H5.3 V8.7 H1 V5.3 H5.3 Z" fill="#f40000" stroke="#b00000" stroke-width=".6"/></svg><svg style="left:1357.7500000000002px;top:356.1px" width="14" height="14"><rect x="1" y="5.3" width="12" height="3.4" fill="#f40000" stroke="#b00000" stroke-width=".6"/></svg><svg style="left:1416.6px;top:355.1px" width="16" height="16" viewBox="0 0 16 16"><g transform="translate(8 8.3) rotate(-42)"><rect x="-6.4" y="-1.4" width="13.2" height="2.8" fill="#e2b054" stroke="#a47a30" stroke-width=".45"/><path d="M-6.4 -0.4 H6.8" stroke="#f4d590" stroke-width=".9"/><rect x="6.8" y="-1.4" width="2.8" height="2.8" rx=".7" fill="#e6454e"/><path d="M-6.4 -1.4 L-9.6 0 L-6.4 1.4 Z" fill="#efdcb6" stroke="#a47a30" stroke-width=".3"/><path d="M-8.5 -0.55 L-9.7 0 L-8.5 .55 Z" fill="#333"/></g></svg><div style="position:absolute;left:1155.5px;top:376.5px;width:298.5px;height:421.5px;background:#fff;"></div><div style="position:absolute;left:1155.5px;top:457px;width:298.5px;height:20px;background:#0a49d6;"></div><div style="position:absolute;left:1161px;top:383.3px;width:16.2px;height:9px;background:#000;border:1px solid #333;"></div><span class="t" style="left:1183.50px;top:381px;font-size:13px;color:#000;font-family:'Liberation Sans',sans-serif;">0</span><svg style="left:1413.9px;top:380.3px;opacity:1" width="18" height="14" viewBox="-9 -7 18 14"><g transform="scale(1.0)"><path d="M-7.4 0.6 C-6.4 -2.6 -3.4 -5.5 0.3 -5.5 C3.6 -5.5 6.3 -3.6 7.3 -0.5 C7 0.6 6.6 1.4 6 2.2 C4.6 4.4 2.6 5.5 0.1 5.5 C-1.6 5.6 -3.2 5 -4.4 4 C-5.8 3 -6.8 1.9 -7.4 0.6 Z" fill="#000"/><path d="M-4.9 0.6 C-4 -1.6 -2 -3 0.3 -3 C2.5 -3 4.2 -1.8 5 0 C4 2.4 2.3 3.5 0.2 3.5 C-2.1 3.5 -3.9 2.4 -4.9 0.6 Z" fill="#fff"/><circle cx="0.2" cy="0.1" r="2.9" fill="#000"/><circle cx="-0.9" cy="-1.1" r="0.75" fill="#fff"/></g></svg><svg style="left:1438.8px;top:378.5px" width="12" height="16" viewBox="0 0 12 16"><path d="M2.6 7.5 V5 A3.4 3.4 0 0 1 9.4 5 V7.5" fill="none" stroke="#bdbdbd" stroke-width="1.5"/><rect x="1" y="7.2" width="10" height="7.8" fill="#bdbdbd"/></svg><div style="position:absolute;left:1161px;top:403.3px;width:16.2px;height:9px;background:#000;border:1px solid #333;"></div><span class="t" style="left:1183.50px;top:401px;font-size:13px;color:#000;font-family:'Liberation Sans',sans-serif;letter-spacing:0.077px;">Bordo</span><svg style="left:1413.9px;top:400.3px;opacity:1" width="18" height="14" viewBox="-9 -7 18 14"><g transform="scale(1.0)"><path d="M-7.4 0.6 C-6.4 -2.6 -3.4 -5.5 0.3 -5.5 C3.6 -5.5 6.3 -3.6 7.3 -0.5 C7 0.6 6.6 1.4 6 2.2 C4.6 4.4 2.6 5.5 0.1 5.5 C-1.6 5.6 -3.2 5 -4.4 4 C-5.8 3 -6.8 1.9 -7.4 0.6 Z" fill="#000"/><path d="M-4.9 0.6 C-4 -1.6 -2 -3 0.3 -3 C2.5 -3 4.2 -1.8 5 0 C4 2.4 2.3 3.5 0.2 3.5 C-2.1 3.5 -3.9 2.4 -4.9 0.6 Z" fill="#fff"/><circle cx="0.2" cy="0.1" r="2.9" fill="#000"/><circle cx="-0.9" cy="-1.1" r="0.75" fill="#fff"/></g></svg><svg style="left:1438.8px;top:398.5px" width="12" height="16" viewBox="0 0 12 16"><path d="M2.6 7.5 V5 A3.4 3.4 0 0 1 9.4 5 V7.5" fill="none" stroke="#bdbdbd" stroke-width="1.5"/><rect x="1" y="7.2" width="10" height="7.8" fill="#bdbdbd"/></svg><div style="position:absolute;left:1161px;top:423.3px;width:16.2px;height:9px;background:#f00;border:1px solid #333;"></div><span class="t" style="left:1183.50px;top:421px;font-size:13px;color:#000;font-family:'Liberation Sans',sans-serif;letter-spacing:0.156px;">Centro</span><svg style="left:1413.9px;top:420.3px;opacity:1" width="18" height="14" viewBox="-9 -7 18 14"><g transform="scale(1.0)"><path d="M-7.4 0.6 C-6.4 -2.6 -3.4 -5.5 0.3 -5.5 C3.6 -5.5 6.3 -3.6 7.3 -0.5 C7 0.6 6.6 1.4 6 2.2 C4.6 4.4 2.6 5.5 0.1 5.5 C-1.6 5.6 -3.2 5 -4.4 4 C-5.8 3 -6.8 1.9 -7.4 0.6 Z" fill="#000"/><path d="M-4.9 0.6 C-4 -1.6 -2 -3 0.3 -3 C2.5 -3 4.2 -1.8 5 0 C4 2.4 2.3 3.5 0.2 3.5 C-2.1 3.5 -3.9 2.4 -4.9 0.6 Z" fill="#fff"/><circle cx="0.2" cy="0.1" r="2.9" fill="#000"/><circle cx="-0.9" cy="-1.1" r="0.75" fill="#fff"/></g></svg><svg style="left:1438.8px;top:418.5px" width="12" height="16" viewBox="0 0 12 16"><path d="M2.6 7.5 V5 A3.4 3.4 0 0 1 9.4 5 V7.5" fill="none" stroke="#bdbdbd" stroke-width="1.5"/><rect x="1" y="7.2" width="10" height="7.8" fill="#bdbdbd"/></svg><div style="position:absolute;left:1161px;top:443.3px;width:16.2px;height:9px;background:#fff;border:1px solid #333;"></div><span class="t" style="left:1183.50px;top:441px;font-size:13px;color:#000;font-family:'Liberation Sans',sans-serif;letter-spacing:0.285px;">Defpoints</span><svg style="left:1413.9px;top:440.3px;opacity:1" width="18" height="14" viewBox="-9 -7 18 14"><g transform="scale(1.0)"><path d="M-7.4 0.6 C-6.4 -2.6 -3.4 -5.5 0.3 -5.5 C3.6 -5.5 6.3 -3.6 7.3 -0.5 C7 0.6 6.6 1.4 6 2.2 C4.6 4.4 2.6 5.5 0.1 5.5 C-1.6 5.6 -3.2 5 -4.4 4 C-5.8 3 -6.8 1.9 -7.4 0.6 Z" fill="#000"/><path d="M-4.9 0.6 C-4 -1.6 -2 -3 0.3 -3 C2.5 -3 4.2 -1.8 5 0 C4 2.4 2.3 3.5 0.2 3.5 C-2.1 3.5 -3.9 2.4 -4.9 0.6 Z" fill="#fff"/><circle cx="0.2" cy="0.1" r="2.9" fill="#000"/><circle cx="-0.9" cy="-1.1" r="0.75" fill="#fff"/></g></svg><svg style="left:1438.8px;top:438.5px" width="12" height="16" viewBox="0 0 12 16"><path d="M2.6 7.5 V5 A3.4 3.4 0 0 1 9.4 5 V7.5" fill="none" stroke="#bdbdbd" stroke-width="1.5"/><rect x="1" y="7.2" width="10" height="7.8" fill="#bdbdbd"/></svg><div style="position:absolute;left:1161px;top:463.3px;width:16.2px;height:9px;background:#e545ff;border:1px solid #223;"></div><span class="t" style="left:1183.50px;top:461px;font-size:13px;color:#fff;font-family:'Liberation Sans',sans-serif;letter-spacing:0.165px;">Finestre di layout</span><svg style="left:1413.9px;top:460.3px;opacity:1" width="18" height="14" viewBox="-9 -7 18 14"><g transform="scale(1.0)"><path d="M-7.4 0.6 C-6.4 -2.6 -3.4 -5.5 0.3 -5.5 C3.6 -5.5 6.3 -3.6 7.3 -0.5 C7 0.6 6.6 1.4 6 2.2 C4.6 4.4 2.6 5.5 0.1 5.5 C-1.6 5.6 -3.2 5 -4.4 4 C-5.8 3 -6.8 1.9 -7.4 0.6 Z" fill="#15275e"/><path d="M-4.9 0.6 C-4 -1.6 -2 -3 0.3 -3 C2.5 -3 4.2 -1.8 5 0 C4 2.4 2.3 3.5 0.2 3.5 C-2.1 3.5 -3.9 2.4 -4.9 0.6 Z" fill="#2f5fdc"/><circle cx="0.2" cy="0.1" r="2.9" fill="#15275e"/><circle cx="-0.9" cy="-1.1" r="0.75" fill="#2f5fdc"/></g></svg><svg style="left:1438.8px;top:458.5px" width="12" height="16" viewBox="0 0 12 16"><path d="M2.6 7.5 V5 A3.4 3.4 0 0 1 9.4 5 V7.5" fill="none" stroke="#b9c4e6" stroke-width="1.5"/><rect x="1" y="7.2" width="10" height="7.8" fill="#b9c4e6"/></svg><div style="position:absolute;left:1161px;top:483.3px;width:16.2px;height:9px;background:#008080;border:1px solid #333;"></div><span class="t" style="left:1183.50px;top:481px;font-size:13px;color:#000;font-family:'Liberation Sans',sans-serif;letter-spacing:0.022px;">Quote</span><svg style="left:1413.9px;top:480.3px;opacity:1" width="18" height="14" viewBox="-9 -7 18 14"><g transform="scale(1.0)"><path d="M-7.4 0.6 C-6.4 -2.6 -3.4 -5.5 0.3 -5.5 C3.6 -5.5 6.3 -3.6 7.3 -0.5 C7 0.6 6.6 1.4 6 2.2 C4.6 4.4 2.6 5.5 0.1 5.5 C-1.6 5.6 -3.2 5 -4.4 4 C-5.8 3 -6.8 1.9 -7.4 0.6 Z" fill="#000"/><path d="M-4.9 0.6 C-4 -1.6 -2 -3 0.3 -3 C2.5 -3 4.2 -1.8 5 0 C4 2.4 2.3 3.5 0.2 3.5 C-2.1 3.5 -3.9 2.4 -4.9 0.6 Z" fill="#fff"/><circle cx="0.2" cy="0.1" r="2.9" fill="#000"/><circle cx="-0.9" cy="-1.1" r="0.75" fill="#fff"/></g></svg><svg style="left:1438.8px;top:478.5px" width="12" height="16" viewBox="0 0 12 16"><path d="M2.6 7.5 V5 A3.4 3.4 0 0 1 9.4 5 V7.5" fill="none" stroke="#bdbdbd" stroke-width="1.5"/><rect x="1" y="7.2" width="10" height="7.8" fill="#bdbdbd"/></svg><div style="position:absolute;left:1161px;top:503.3px;width:16.2px;height:9px;background:#000;border:1px solid #333;"></div><span class="t" style="left:1183.50px;top:501px;font-size:13px;color:#000;font-family:'Liberation Sans',sans-serif;letter-spacing:0.078px;">Visibile</span><svg style="left:1413.9px;top:500.3px;opacity:1" width="18" height="14" viewBox="-9 -7 18 14"><g transform="scale(1.0)"><path d="M-7.4 0.6 C-6.4 -2.6 -3.4 -5.5 0.3 -5.5 C3.6 -5.5 6.3 -3.6 7.3 -0.5 C7 0.6 6.6 1.4 6 2.2 C4.6 4.4 2.6 5.5 0.1 5.5 C-1.6 5.6 -3.2 5 -4.4 4 C-5.8 3 -6.8 1.9 -7.4 0.6 Z" fill="#000"/><path d="M-4.9 0.6 C-4 -1.6 -2 -3 0.3 -3 C2.5 -3 4.2 -1.8 5 0 C4 2.4 2.3 3.5 0.2 3.5 C-2.1 3.5 -3.9 2.4 -4.9 0.6 Z" fill="#fff"/><circle cx="0.2" cy="0.1" r="2.9" fill="#000"/><circle cx="-0.9" cy="-1.1" r="0.75" fill="#fff"/></g></svg><svg style="left:1438.8px;top:498.5px" width="12" height="16" viewBox="0 0 12 16"><path d="M2.6 7.5 V5 A3.4 3.4 0 0 1 9.4 5 V7.5" fill="none" stroke="#bdbdbd" stroke-width="1.5"/><rect x="1" y="7.2" width="10" height="7.8" fill="#bdbdbd"/></svg><svg style="left:1393.0px;top:459.0px" width="16" height="16" viewBox="0 0 16 16"><g transform="translate(8 8.3) rotate(-42)"><rect x="-6.4" y="-1.4" width="13.2" height="2.8" fill="#e2b054" stroke="#a47a30" stroke-width=".45"/><path d="M-6.4 -0.4 H6.8" stroke="#f4d590" stroke-width=".9"/><rect x="6.8" y="-1.4" width="2.8" height="2.8" rx=".7" fill="#e6454e"/><path d="M-6.4 -1.4 L-9.6 0 L-6.4 1.4 Z" fill="#efdcb6" stroke="#a47a30" stroke-width=".3"/><path d="M-8.5 -0.55 L-9.7 0 L-8.5 .55 Z" fill="#333"/></g></svg><span class="t" style="left:2.50px;top:808px;font-size:9.8px;color:#111;font-family:'Liberation Sans',sans-serif;letter-spacing:0.398px;-webkit-text-stroke:0.08px currentColor;">200.8899,23.3333</span><span class="t" style="left:2.50px;top:828px;font-size:9.8px;color:#111;font-family:'Liberation Sans',sans-serif;letter-spacing:0.069px;-webkit-text-stroke:0.08px currentColor;">@-19.1101,-96.6667</span><div style="position:absolute;left:253.3px;top:802px;width:1px;height:40px;background:#777;"></div><span class="t" style="left:256.50px;top:808px;font-size:9.8px;color:#111;font-family:'Liberation Sans',sans-serif;letter-spacing:0.353px;-webkit-text-stroke:0.08px currentColor;">202.2405&lt;7°</span><span class="t" style="left:256.50px;top:828px;font-size:9.8px;color:#111;font-family:'Liberation Sans',sans-serif;letter-spacing:0.219px;-webkit-text-stroke:0.08px currentColor;">@98.5375&lt;259°</span><div style="position:absolute;left:506.5px;top:819px;width:5px;height:5px;background:#c6c6c6;border-radius:50%;"></div><div style="position:absolute;left:941.0px;top:819px;width:5px;height:5px;background:#c6c6c6;border-radius:50%;"></div><div style="position:absolute;left:1270.0px;top:819px;width:5px;height:5px;background:#c6c6c6;border-radius:50%;"></div><span class="t" style="left:571.50px;top:812px;font-size:9.8px;color:#111;font-family:'Liberation Sans',sans-serif;letter-spacing:0.184px;-webkit-text-stroke:0.08px currentColor;">Selezionare entità o regione</span><span class="t" style="left:568.50px;top:823px;font-size:9.8px;color:#111;font-family:'Liberation Sans',sans-serif;letter-spacing:0.246px;-webkit-text-stroke:0.08px currentColor;">Spostare entità o riferimento</span><svg style="left:716.2px;top:805px" width="20" height="32" viewBox="0 0 20 32"><rect x="1.2" y="1" width="17.4" height="29.6" rx="8.5" fill="#fff" stroke="#222" stroke-width="1.1"/><path d="M1.2 12.5 H18.6 M9.9 1 V5 M9.9 9.5 V12.5" stroke="#222" stroke-width="1"/><rect x="8.4" y="4.5" width="3" height="5.5" rx="1.5" fill="#fff" stroke="#222" stroke-width="0.9"/></svg><span class="t" style="left:949.00px;top:812px;font-size:9.8px;color:#111;font-family:'Liberation Sans',sans-serif;letter-spacing:0.217px;-webkit-text-stroke:0.08px currentColor;">Entità selezionate:</span><span class="t" style="left:949.00px;top:823px;font-size:9.8px;color:#111;font-family:'Liberation Sans',sans-serif;letter-spacing:0.318px;-webkit-text-stroke:0.08px currentColor;">1 Attributo su livello &quot;Bordo&quot;</span><div style="position:absolute;left:474px;top:146px;width:552.5px;height:552px;background:#ececec;border:3px solid #a9a9a9;border-radius:4px;"></div><span class="t" style="left:502.30px;top:173px;font-size:11px;color:#000;font-family:'Liberation Sans',sans-serif;letter-spacing:0.421px;">Carattere principale</span><div style="position:absolute;left:495px;top:184.3px;width:210.2px;height:127.3px;background:#e4e4e4;border:1px solid #dddddd;border-radius:5px;"></div><div style="position:absolute;left:510.2px;top:200.2px;width:179.8px;height:21.2px;background:#fff;border-radius:5.5px;box-shadow:0 0.4px 1px rgba(60,80,110,.28),0 0 0 0.6px rgba(120,150,190,.3);"></div><span class="t" style="left:515.30px;top:204px;font-size:13.5px;color:#000;font-family:'Liberation Sans',sans-serif;letter-spacing:-0.302px;">Arial</span><div style="position:absolute;left:671px;top:203px;width:16.3px;height:16px;background:linear-gradient(#4a9bff,#0f6fff);border-radius:4px;"></div><svg style="left:671px;top:203px" width="16.3" height="16"><path d="M5.2 6.6 L8.15 3.7 L11.1 6.6 M5.2 9.6 L8.15 12.5 L11.1 9.6" fill="none" stroke="#fff" stroke-width="1.4" stroke-linecap="round" stroke-linejoin="round"/></svg><span class="t" style="left:510.30px;top:237px;font-size:13.5px;color:#000;font-family:'Liberation Sans',sans-serif;letter-spacing:-0.146px;">Altezza:</span><div style="position:absolute;left:566.7px;top:232.8px;width:122.7px;height:19.6px;background:#fff;border-bottom:1px solid #b4b4b4;box-shadow:0 0 0 0.4px rgba(0,0,0,.06);"></div><span class="t" style="left:568.30px;top:237px;font-size:13.5px;color:#000;font-family:'Liberation Sans',sans-serif;">5</span><div style="position:absolute;left:510.8px;top:263.9px;width:12.8px;height:12.5px;background:#fff;border-radius:3.2px;box-shadow:0 0.4px 0.8px rgba(0,0,0,.18),0 0 0 0.5px rgba(0,0,0,.07);"></div><span class="t" style="left:528.30px;top:264px;font-size:13.5px;color:#000;font-family:'Liberation Sans',sans-serif;letter-spacing:-0.140px;">Grassetto</span><div style="position:absolute;left:510.8px;top:284.9px;width:12.8px;height:12.5px;background:#fff;border-radius:3.2px;box-shadow:0 0.4px 0.8px rgba(0,0,0,.18),0 0 0 0.5px rgba(0,0,0,.07);"></div><span class="t" style="left:528.30px;top:285px;font-size:13.5px;color:#000;font-family:'Liberation Sans',sans-serif;letter-spacing:-0.177px;">Corsivo</span><span class="t" style="left:502.30px;top:319px;font-size:11px;color:#000;font-family:'Liberation Sans',sans-serif;letter-spacing:0.417px;">Geometria del testo</span><div style="position:absolute;left:495px;top:330.2px;width:210.2px;height:51.4px;background:#e4e4e4;border:1px solid #dddddd;border-radius:5px;"></div><span class="t" style="left:510.00px;top:350px;font-size:13.5px;color:#000;font-family:'Liberation Sans',sans-serif;letter-spacing:-0.081px;">Angolo:</span><div style="position:absolute;left:564.7px;top:346.8px;width:124.7px;height:19.6px;background:#fff;border-bottom:1px solid #b4b4b4;box-shadow:0 0 0 0.4px rgba(0,0,0,.06);"></div><span class="t" style="left:566.20px;top:350px;font-size:13.5px;color:#000;font-family:'Liberation Sans',sans-serif;">0</span><span class="t" style="left:502.30px;top:388px;font-size:11px;color:#000;font-family:'Liberation Sans',sans-serif;letter-spacing:0.337px;">Allineamento</span><div style="position:absolute;left:495px;top:400.5px;width:210.2px;height:175.7px;background:#e4e4e4;border:1px solid #dddddd;border-radius:5px;"></div><div style="position:absolute;left:546px;top:416px;width:32px;height:32px;background:#b4b4b4;border-radius:4.5px;"></div><svg style="left:546px;top:416px" width="32" height="32"><path d="M8.2 8.4 H26 M8.2 8.4 V26" stroke="#9a9af0" stroke-width="1.3" fill="none"/><circle cx="8" cy="8.2" r="1.7" fill="#f00"/></svg><span class="t" style="left:554.20px;top:423px;font-size:11.2px;color:#000;font-family:'Liberation Sans',sans-serif;letter-spacing:-0.100px;">Ag</span><div style="position:absolute;left:584px;top:416px;width:32px;height:32px;background:linear-gradient(#f0f0f0,#f8f8f8);border:1px solid #a9a9a9;"></div><svg style="left:584px;top:416px" width="32" height="32"><path d="M3.3 6.3 H28.8 M16 6.3 V28.6" stroke="#b4b4fa" stroke-width="1.7" fill="none"/></svg><span class="t" style="left:591.60px;top:420px;font-size:14px;color:#000;font-family:'Liberation Sans',sans-serif;letter-spacing:-0.325px;">Ag</span><svg style="left:584px;top:416px" width="32" height="32"><circle cx="16" cy="6.3" r="2.1" fill="#f00"/></svg><div style="position:absolute;left:622px;top:416px;width:32px;height:32px;background:linear-gradient(#f0f0f0,#f8f8f8);border:1px solid #a9a9a9;"></div><svg style="left:622px;top:416px" width="32" height="32"><path d="M3.3 6.3 H28.8 M25.7 3 V28.6" stroke="#b4b4fa" stroke-width="1.7" fill="none"/></svg><span class="t" style="left:631.20px;top:420px;font-size:14px;color:#000;font-family:'Liberation Sans',sans-serif;letter-spacing:-0.325px;">Ag</span><svg style="left:622px;top:416px" width="32" height="32"><circle cx="25.7" cy="6.3" r="2.1" fill="#f00"/></svg><div style="position:absolute;left:546px;top:454px;width:32px;height:32px;background:linear-gradient(#f0f0f0,#f8f8f8);border:1px solid #a9a9a9;"></div><svg style="left:546px;top:454px" width="32" height="32"><path d="M3.3 15.9 H28.8 M6.3 2.9 V28.8" stroke="#b4b4fa" stroke-width="1.7" fill="none"/></svg><span class="t" style="left:552.30px;top:463px;font-size:14px;color:#000;font-family:'Liberation Sans',sans-serif;letter-spacing:-0.325px;">Ag</span><svg style="left:546px;top:454px" width="32" height="32"><circle cx="6.1" cy="15.9" r="2.1" fill="#f00"/></svg><div style="position:absolute;left:584px;top:454px;width:32px;height:32px;background:linear-gradient(#f0f0f0,#f8f8f8);border:1px solid #a9a9a9;"></div><svg style="left:584px;top:454px" width="32" height="32"><path d="M3.3 15.9 H28.8 M16 2.9 V28.8" stroke="#b4b4fa" stroke-width="1.7" fill="none"/></svg><span class="t" style="left:591.60px;top:463px;font-size:14px;color:#000;font-family:'Liberation Sans',sans-serif;letter-spacing:-0.325px;">Ag</span><svg style="left:584px;top:454px" width="32" height="32"><circle cx="16" cy="15.9" r="2.1" fill="#f00"/></svg><div style="position:absolute;left:622px;top:454px;width:32px;height:32px;background:linear-gradient(#f0f0f0,#f8f8f8);border:1px solid #a9a9a9;"></div><svg style="left:622px;top:454px" width="32" height="32"><path d="M3.3 15.9 H28.8 M25.7 2.9 V28.8" stroke="#b4b4fa" stroke-width="1.7" fill="none"/></svg><span class="t" style="left:631.20px;top:462px;font-size:14px;color:#000;font-family:'Liberation Sans',sans-serif;letter-spacing:-0.325px;">Ag</span><svg style="left:622px;top:454px" width="32" height="32"><circle cx="25.7" cy="15.9" r="2.1" fill="#f00"/></svg><div style="position:absolute;left:546px;top:492.2px;width:32px;height:32px;background:linear-gradient(#f0f0f0,#f8f8f8);border:1px solid #a9a9a9;"></div><svg style="left:546px;top:492.2px" width="32" height="32"><path d="M3.3 25.5 H28.8 M6.3 2.9 V25.5" stroke="#b4b4fa" stroke-width="1.7" fill="none"/></svg><span class="t" style="left:552.30px;top:505px;font-size:14px;color:#000;font-family:'Liberation Sans',sans-serif;letter-spacing:-0.325px;">Ag</span><svg style="left:546px;top:492.2px" width="32" height="32"><circle cx="6.1" cy="25.8" r="2.1" fill="#f00"/></svg><div style="position:absolute;left:584px;top:492.2px;width:32px;height:32px;background:linear-gradient(#f0f0f0,#f8f8f8);border:1px solid #a9a9a9;"></div><svg style="left:584px;top:492.2px" width="32" height="32"><path d="M3.3 25.5 H28.8 M16 2.9 V25.5" stroke="#b4b4fa" stroke-width="1.7" fill="none"/></svg><span class="t" style="left:591.60px;top:505px;font-size:14px;color:#000;font-family:'Liberation Sans',sans-serif;letter-spacing:-0.325px;">Ag</span><svg style="left:584px;top:492.2px" width="32" height="32"><circle cx="16" cy="25.8" r="2.1" fill="#f00"/></svg><div style="position:absolute;left:622px;top:492.2px;width:32px;height:32px;background:linear-gradient(#f0f0f0,#f8f8f8);border:1px solid #a9a9a9;"></div><svg style="left:622px;top:492.2px" width="32" height="32"><path d="M3.3 25.5 H28.8 M25.7 2.9 V25.5" stroke="#b4b4fa" stroke-width="1.7" fill="none"/></svg><span class="t" style="left:631.20px;top:505px;font-size:14px;color:#000;font-family:'Liberation Sans',sans-serif;letter-spacing:-0.325px;">Ag</span><svg style="left:622px;top:492.2px" width="32" height="32"><circle cx="25.7" cy="25.8" r="2.1" fill="#f00"/></svg><div style="position:absolute;left:546px;top:530.1px;width:32px;height:32px;background:linear-gradient(#f0f0f0,#f8f8f8);border:1px solid #a9a9a9;"></div><svg style="left:546px;top:530.1px" width="32" height="32"><path d="M3.3 25.5 H28.8 M6.3 2.9 V25.5" stroke="#b4b4fa" stroke-width="1.7" fill="none"/></svg><span class="t" style="left:552.30px;top:540px;font-size:14px;color:#000;font-family:'Liberation Sans',sans-serif;letter-spacing:-0.325px;">Ag</span><svg style="left:546px;top:530.1px" width="32" height="32"><circle cx="6.1" cy="25.8" r="2.1" fill="#f00"/></svg><div style="position:absolute;left:584px;top:530.1px;width:32px;height:32px;background:linear-gradient(#f0f0f0,#f8f8f8);border:1px solid #a9a9a9;"></div><svg style="left:584px;top:530.1px" width="32" height="32"><path d="M3.3 25.5 H28.8 M16 2.9 V25.5" stroke="#b4b4fa" stroke-width="1.7" fill="none"/></svg><span class="t" style="left:591.60px;top:540px;font-size:14px;color:#000;font-family:'Liberation Sans',sans-serif;letter-spacing:-0.325px;">Ag</span><svg style="left:584px;top:530.1px" width="32" height="32"><circle cx="16" cy="25.8" r="2.1" fill="#f00"/></svg><div style="position:absolute;left:622px;top:530.1px;width:32px;height:32px;background:linear-gradient(#f0f0f0,#f8f8f8);border:1px solid #a9a9a9;"></div><svg style="left:622px;top:530.1px" width="32" height="32"><path d="M3.3 25.5 H28.8 M25.7 2.9 V25.5" stroke="#b4b4fa" stroke-width="1.7" fill="none"/></svg><span class="t" style="left:631.20px;top:540px;font-size:14px;color:#000;font-family:'Liberation Sans',sans-serif;letter-spacing:-0.325px;">Ag</span><svg style="left:622px;top:530.1px" width="32" height="32"><circle cx="25.7" cy="25.8" r="2.1" fill="#f00"/></svg><div style="position:absolute;left:721px;top:181.8px;width:284px;height:443px;background:#e4e4e4;border:1px solid #dddddd;border-radius:5px;"></div><span class="t" style="left:744.00px;top:232px;font-size:13.5px;color:#000;font-family:'Liberation Sans',sans-serif;letter-spacing:0.024px;">Etichetta:</span><div style="position:absolute;left:809.9px;top:229.4px;width:192.4px;height:18.8px;background:#fff;border-bottom:1px solid #b4b4b4;box-shadow:0 0 0 0.4px rgba(0,0,0,.06);"></div><span class="t" style="left:811.30px;top:232px;font-size:13.5px;color:#c2c2c2;font-family:'Liberation Sans',sans-serif;letter-spacing:-0.001px;">Title</span><span class="t" style="left:744.00px;top:263px;font-size:13.5px;color:#000;font-family:'Liberation Sans',sans-serif;letter-spacing:-0.246px;">Valore:</span><div style="position:absolute;left:809.9px;top:259.9px;width:192.4px;height:19.3px;background:#fff;border-bottom:1px solid #b4b4b4;box-shadow:0 0 0 0.4px rgba(0,0,0,.06);"></div><span class="t" style="left:811.20px;top:263px;font-size:13.5px;color:#000;font-family:'Liberation Sans',sans-serif;letter-spacing:-0.025px;">Casetta per uccelli</span><div style="position:absolute;left:802px;top:617px;width:121px;height:20px;background:#1a85ff;border-radius:0 0 3.5px 3.5px;"></div><span class="t" style="left:814.50px;top:621px;font-size:13.2px;color:#fff;font-family:'Liberation Sans',sans-serif;letter-spacing:0.252px;">Dettagli attributi</span><div style="position:absolute;left:848px;top:658.5px;width:73.2px;height:19.3px;background:#fff;border-radius:5px;box-shadow:0 0.5px 1.5px rgba(0,0,0,.35),0 0 0 0.5px rgba(0,0,0,.1);"></div><span class="t" style="left:862.60px;top:661px;font-size:13.5px;color:#000;font-family:'Liberation Sans',sans-serif;letter-spacing:-0.240px;">Annulla</span><div style="position:absolute;left:937px;top:658px;width:67px;height:20px;background:linear-gradient(#2e8fff,#0768ff);border-radius:5px;"></div><span class="t" style="left:961.80px;top:661px;font-size:13.5px;color:#fff;font-family:'Liberation Sans',sans-serif;letter-spacing:-0.505px;transform:scaleX(0.9);transform-origin:0 0;">OK</span><div style="position:absolute;left:869.2px;top:228.9px;width:80px;height:80px;border-radius:50%;background:radial-gradient(circle closest-side,rgba(255,255,255,0) 0,rgba(255,255,255,0) 58%,rgba(255,255,255,.35) 74%,rgba(255,255,255,.72) 83%,rgba(176,194,214,.8) 87%,rgba(156,178,203,.78) 91%,rgba(164,185,208,.7) 95%,rgba(170,190,212,.3) 98%,rgba(170,190,212,0) 100%);"></div><svg style="left:908.8px;top:269.2px" width="20" height="30" viewBox="0 0 20 30"><path d="M0 0 L0 21.9 L4.7 17.4 L10.4 26.8 L14 25.1 L8.6 15.6 L15.8 15.5 Z" fill="#fff" stroke="#000" stroke-width="1.3" stroke-linejoin="miter"/></svg></div></body></html>
